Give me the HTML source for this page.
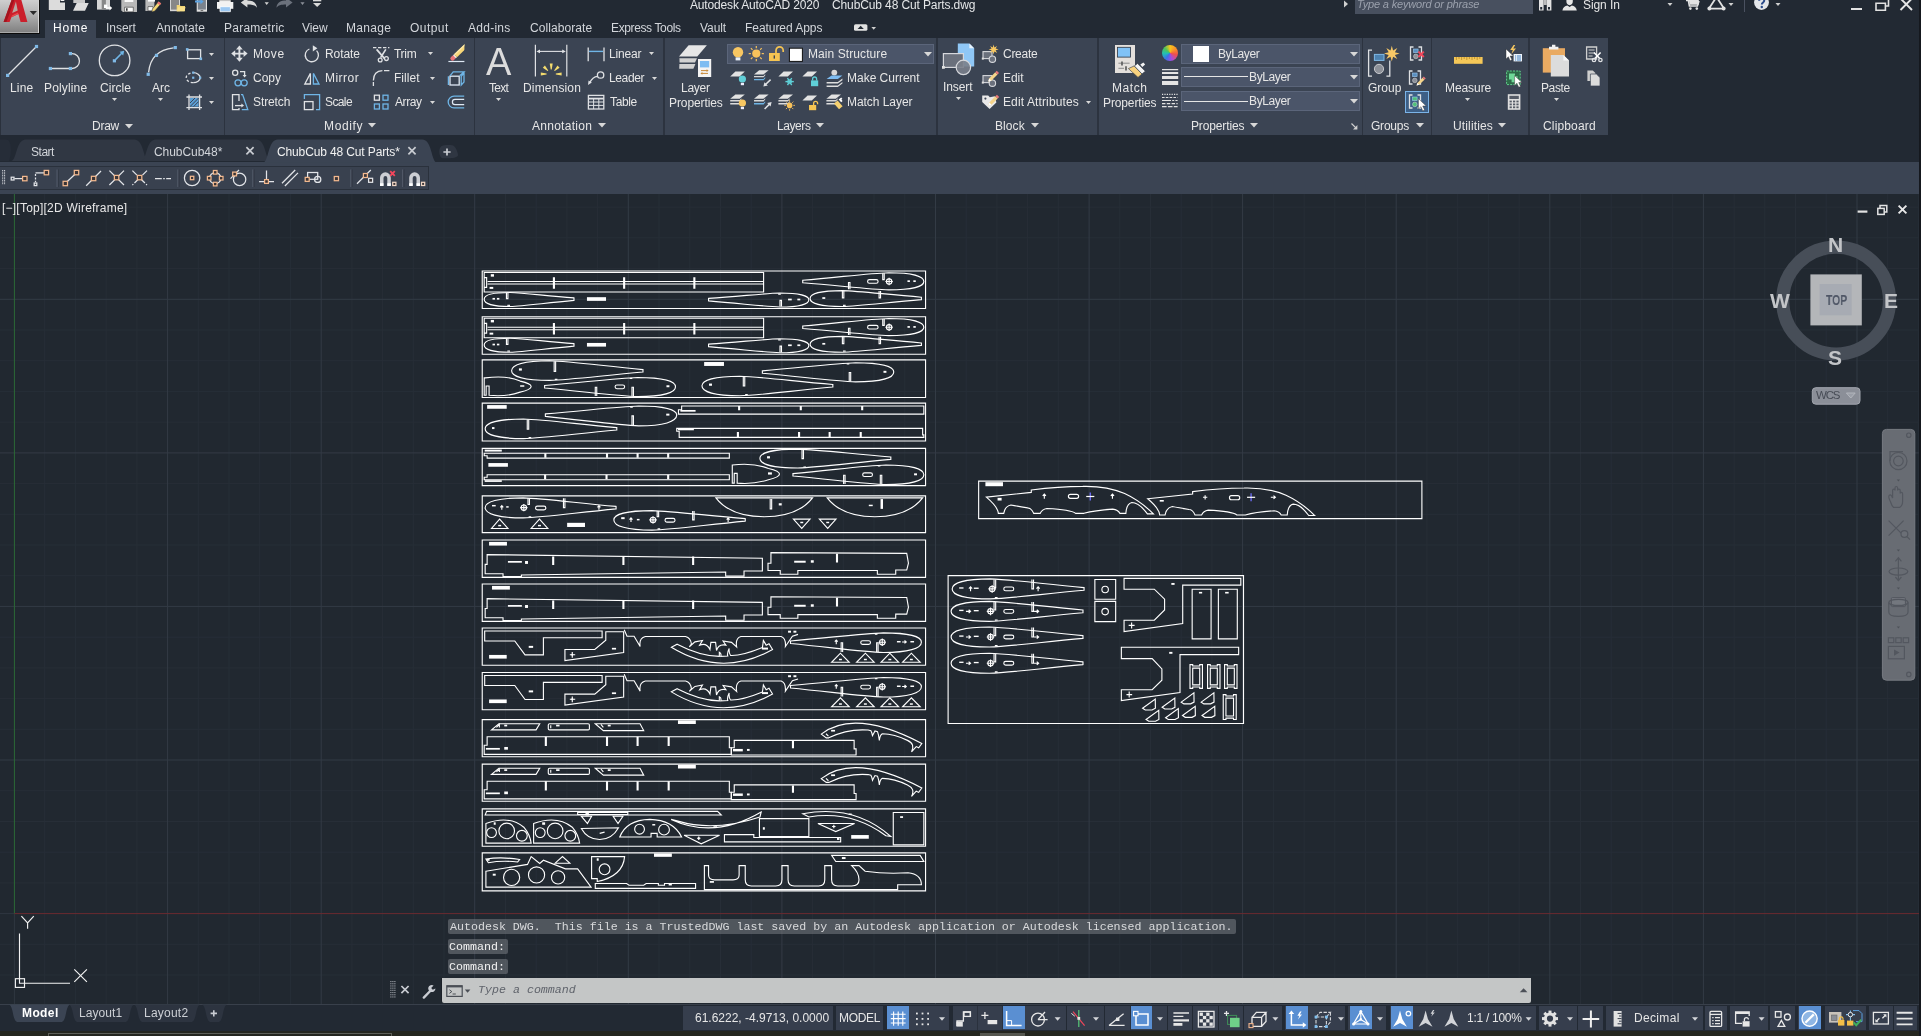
<!DOCTYPE html>
<html><head><meta charset="utf-8"><title>Autodesk AutoCAD 2020 - ChubCub 48 Cut Parts.dwg</title>
<style>html,body{margin:0;padding:0}body{width:1921px;height:1036px;overflow:hidden;background:#212830;position:relative;font-family:"Liberation Sans",sans-serif}
body>div,body>svg{position:absolute;display:block}svg{overflow:hidden}.t{white-space:pre;will-change:transform}</style></head>
<body>
<div style="left:0px;top:194px;width:1921px;height:810px;background:#212830;"></div>
<svg style="left:0px;top:194px;" width="1921" height="810" viewBox="0 194 1921 810"><path d="M44.7 194V1004M75.4 194V1004M106.1 194V1004M136.9 194V1004M198.3 194V1004M229.0 194V1004M259.7 194V1004M290.4 194V1004M351.9 194V1004M382.6 194V1004M413.3 194V1004M444.0 194V1004M505.5 194V1004M536.2 194V1004M566.9 194V1004M597.6 194V1004M659.0 194V1004M689.8 194V1004M720.5 194V1004M751.2 194V1004M812.6 194V1004M843.3 194V1004M874.0 194V1004M904.8 194V1004M966.2 194V1004M996.9 194V1004M1027.6 194V1004M1058.3 194V1004M1119.8 194V1004M1150.5 194V1004M1181.2 194V1004M1211.9 194V1004M1273.4 194V1004M1304.1 194V1004M1334.8 194V1004M1365.5 194V1004M1426.9 194V1004M1457.7 194V1004M1488.4 194V1004M1519.1 194V1004M1580.5 194V1004M1611.2 194V1004M1641.9 194V1004M1672.7 194V1004M1734.1 194V1004M1764.8 194V1004M1795.5 194V1004M1826.2 194V1004M1887.7 194V1004M1918.4 194V1004M0 882.9H1921M0 852.2H1921M0 821.5H1921M0 790.7H1921M0 729.3H1921M0 698.6H1921M0 667.9H1921M0 637.2H1921M0 575.7H1921M0 545.0H1921M0 514.3H1921M0 483.6H1921M0 422.1H1921M0 391.4H1921M0 360.7H1921M0 330.0H1921M0 268.6H1921M0 237.8H1921M0 207.1H1921M0 944.3H1921M0 975.0H1921" stroke="#272e37" stroke-width="1" fill="none"/><path d="M167.6 194V1004M321.2 194V1004M474.7 194V1004M628.3 194V1004M781.9 194V1004M935.5 194V1004M1089.1 194V1004M1242.6 194V1004M1396.2 194V1004M1549.8 194V1004M1703.4 194V1004M1857.0 194V1004M0 760.0H1921M0 606.4H1921M0 452.9H1921M0 299.3H1921" stroke="#333b45" stroke-width="1" fill="none"/><path d="M14.4 913.6V1004M0 913.6H14.4" stroke="#2f3740" stroke-width="1" fill="none"/><path d="M14.4 194V913.6" stroke="#2c6a36" stroke-width="1"/><path d="M14.4 913.6H1921" stroke="#6a2a30" stroke-width="1"/></svg>
<div class="t" style="left:2.14px;top:201.84px;font-size:12px;line-height:12px;color:#e8e8e8;letter-spacing:0.230px;">[−][Top][2D Wireframe]</div>
<svg style="left:1854px;top:203px;" width="60" height="14" viewBox="0 0 60 14"><path d="M3.600 8.600h9.800" stroke="#e2e2e2" stroke-width="2.200"/><path d="M26 5.400v-2.800h6.800v6.400h-2.600" stroke="#e2e2e2" stroke-width="1.500" fill="none"/><rect x="23.800" y="5.400" width="6.400" height="6" fill="#212830" stroke="#e2e2e2" stroke-width="1.500"/><path d="M44.600 2.600l7.800 7.800M52.400 2.600l-7.800 7.800" stroke="#e8e8e8" stroke-width="1.900"/></svg>
<svg style="left:470px;top:260px;" width="980" height="640" viewBox="470 260 980 640"><g transform="translate(470 260) scale(0.244664)"><rect x="50" y="45" width="1812" height="153" fill="none" stroke="#fff" stroke-width="1.12" vector-effect="non-scaling-stroke"/><path d="M58 51H1200V131H58zM72 88H1200M72 98H1200M58 72H68V112H58" fill="none" stroke="#fff" stroke-width="1.12" vector-effect="non-scaling-stroke"/><path d="M341 70V115H345V70M628 70V115H632V70M915 70V115H919V70" fill="none" stroke="#fff" stroke-width="1.12" vector-effect="non-scaling-stroke"/><rect x="85" y="58" width="13" height="10" fill="#fff" stroke="none"/><rect x="80" y="110" width="15" height="8" fill="#fff" stroke="none"/><path d="M1360.0 83.0C1528.3 68.2 1637.2 54.2 1711.5 52.0C1805.5 52.0 1855.0 66.4 1855.0 88.0C1855.0 108.4 1805.5 122.0 1711.5 122.0C1637.2 120.0 1528.3 106.7 1360.0 93.0z" fill="none" stroke="#fff" stroke-width="1.12" vector-effect="non-scaling-stroke"/><path d="M1547 120V92H1553V120" fill="none" stroke="#fff" stroke-width="1.12" vector-effect="non-scaling-stroke"/><path d="M1687 54V80H1693V54" fill="none" stroke="#fff" stroke-width="1.12" vector-effect="non-scaling-stroke"/><rect x="1625" y="80" width="43" height="15" rx="7.5" fill="none" stroke="#fff" stroke-width="1.12" vector-effect="non-scaling-stroke"/><circle cx="1713" cy="88" r="11" fill="none" stroke="#fff" stroke-width="1.12" vector-effect="non-scaling-stroke"/><path d="M1698 88H1728M1713 73V103" fill="none" stroke="#fff" stroke-width="1.12" vector-effect="non-scaling-stroke"/><rect x="1788" y="83" width="10" height="7" fill="#fff" stroke="none"/><rect x="1812" y="83" width="10" height="7" fill="#fff" stroke="none"/><path d="M425.0 155.0C300.2 145.2 219.5 134.6 164.4 133.0C94.7 133.0 58.0 143.8 58.0 160.0C58.0 178.0 94.7 190.0 164.4 190.0C219.5 188.2 300.2 176.5 425.0 165.0z" fill="none" stroke="#fff" stroke-width="1.12" vector-effect="non-scaling-stroke"/><path d="M149 135V158H155V135" fill="none" stroke="#fff" stroke-width="1.12" vector-effect="non-scaling-stroke"/><path d="M155 188V185H161V188" fill="none" stroke="#fff" stroke-width="1.12" vector-effect="non-scaling-stroke"/><rect x="92" y="155" width="10" height="7" fill="#fff" stroke="none"/><rect x="110" y="155" width="10" height="7" fill="#fff" stroke="none"/><rect x="478" y="152" width="78" height="15" fill="#fff" stroke="none"/><path d="M975.0 157.0C1114.4 147.2 1204.6 136.6 1266.1 135.0C1344.0 135.0 1385.0 145.8 1385.0 162.0C1385.0 180.0 1344.0 192.0 1266.1 192.0C1204.6 190.2 1114.4 178.5 975.0 167.0z" fill="none" stroke="#fff" stroke-width="1.12" vector-effect="non-scaling-stroke"/><path d="M1267 190V165H1273V190" fill="none" stroke="#fff" stroke-width="1.12" vector-effect="non-scaling-stroke"/><path d="M1262 137V140H1268V137" fill="none" stroke="#fff" stroke-width="1.12" vector-effect="non-scaling-stroke"/><rect x="1300" y="158" width="15" height="7" fill="#fff" stroke="none"/><rect x="1338" y="158" width="12" height="7" fill="#fff" stroke="none"/><path d="M1845.0 152.0C1690.3 139.4 1590.2 126.9 1522.0 125.0C1435.5 125.0 1390.0 137.8 1390.0 157.0C1390.0 176.8 1435.5 190.0 1522.0 190.0C1590.2 188.0 1690.3 175.2 1845.0 162.0z" fill="none" stroke="#fff" stroke-width="1.12" vector-effect="non-scaling-stroke"/><path d="M1522 127V155H1528V127" fill="none" stroke="#fff" stroke-width="1.12" vector-effect="non-scaling-stroke"/><path d="M1672 127V155H1678V127" fill="none" stroke="#fff" stroke-width="1.12" vector-effect="non-scaling-stroke"/><path d="M1527 188V185H1533V188" fill="none" stroke="#fff" stroke-width="1.12" vector-effect="non-scaling-stroke"/><rect x="1440" y="152" width="12" height="7" fill="#fff" stroke="none"/><rect x="50" y="232" width="1812" height="153" fill="none" stroke="#fff" stroke-width="1.12" vector-effect="non-scaling-stroke"/><path d="M58 238H1200V318H58zM72 275H1200M72 285H1200M58 259H68V299H58" fill="none" stroke="#fff" stroke-width="1.12" vector-effect="non-scaling-stroke"/><path d="M341 257V302H345V257M628 257V302H632V257M915 257V302H919V257" fill="none" stroke="#fff" stroke-width="1.12" vector-effect="non-scaling-stroke"/><rect x="85" y="245" width="13" height="10" fill="#fff" stroke="none"/><rect x="80" y="297" width="15" height="8" fill="#fff" stroke="none"/><path d="M1360.0 270.0C1528.3 255.2 1637.2 241.2 1711.5 239.0C1805.5 239.0 1855.0 253.4 1855.0 275.0C1855.0 295.4 1805.5 309.0 1711.5 309.0C1637.2 307.0 1528.3 293.7 1360.0 280.0z" fill="none" stroke="#fff" stroke-width="1.12" vector-effect="non-scaling-stroke"/><path d="M1547 307V279H1553V307" fill="none" stroke="#fff" stroke-width="1.12" vector-effect="non-scaling-stroke"/><path d="M1687 241V267H1693V241" fill="none" stroke="#fff" stroke-width="1.12" vector-effect="non-scaling-stroke"/><rect x="1625" y="267" width="43" height="15" rx="7.5" fill="none" stroke="#fff" stroke-width="1.12" vector-effect="non-scaling-stroke"/><circle cx="1713" cy="275" r="11" fill="none" stroke="#fff" stroke-width="1.12" vector-effect="non-scaling-stroke"/><path d="M1698 275H1728M1713 260V290" fill="none" stroke="#fff" stroke-width="1.12" vector-effect="non-scaling-stroke"/><rect x="1788" y="270" width="10" height="7" fill="#fff" stroke="none"/><rect x="1812" y="270" width="10" height="7" fill="#fff" stroke="none"/><path d="M425.0 342.0C300.2 332.1 219.5 321.6 164.4 320.0C94.7 320.0 58.0 330.8 58.0 347.0C58.0 365.0 94.7 377.0 164.4 377.0C219.5 375.2 300.2 363.5 425.0 352.0z" fill="none" stroke="#fff" stroke-width="1.12" vector-effect="non-scaling-stroke"/><path d="M149 322V345H155V322" fill="none" stroke="#fff" stroke-width="1.12" vector-effect="non-scaling-stroke"/><path d="M155 375V372H161V375" fill="none" stroke="#fff" stroke-width="1.12" vector-effect="non-scaling-stroke"/><rect x="92" y="342" width="10" height="7" fill="#fff" stroke="none"/><rect x="110" y="342" width="10" height="7" fill="#fff" stroke="none"/><rect x="478" y="339" width="78" height="15" fill="#fff" stroke="none"/><path d="M975.0 344.0C1114.4 334.1 1204.6 323.6 1266.1 322.0C1344.0 322.0 1385.0 332.8 1385.0 349.0C1385.0 367.0 1344.0 379.0 1266.1 379.0C1204.6 377.2 1114.4 365.5 975.0 354.0z" fill="none" stroke="#fff" stroke-width="1.12" vector-effect="non-scaling-stroke"/><path d="M1267 377V352H1273V377" fill="none" stroke="#fff" stroke-width="1.12" vector-effect="non-scaling-stroke"/><path d="M1262 324V327H1268V324" fill="none" stroke="#fff" stroke-width="1.12" vector-effect="non-scaling-stroke"/><rect x="1300" y="345" width="15" height="7" fill="#fff" stroke="none"/><rect x="1338" y="345" width="12" height="7" fill="#fff" stroke="none"/><path d="M1845.0 339.0C1690.3 326.4 1590.2 313.9 1522.0 312.0C1435.5 312.0 1390.0 324.8 1390.0 344.0C1390.0 363.8 1435.5 377.0 1522.0 377.0C1590.2 375.0 1690.3 362.1 1845.0 349.0z" fill="none" stroke="#fff" stroke-width="1.12" vector-effect="non-scaling-stroke"/><path d="M1522 314V342H1528V314" fill="none" stroke="#fff" stroke-width="1.12" vector-effect="non-scaling-stroke"/><path d="M1672 314V342H1678V314" fill="none" stroke="#fff" stroke-width="1.12" vector-effect="non-scaling-stroke"/><path d="M1527 375V372H1533V375" fill="none" stroke="#fff" stroke-width="1.12" vector-effect="non-scaling-stroke"/><rect x="1440" y="339" width="12" height="7" fill="#fff" stroke="none"/><rect x="50" y="408" width="1812" height="154" fill="none" stroke="#fff" stroke-width="1.12" vector-effect="non-scaling-stroke"/><path d="M707.0 448.0C524.4 430.4 406.3 414.5 325.7 412.0C223.7 412.0 170.0 428.4 170.0 453.0C170.0 476.4 223.7 492.0 325.7 492.0C406.3 489.7 524.4 474.4 707.0 458.0z" fill="none" stroke="#fff" stroke-width="1.12" vector-effect="non-scaling-stroke"/><path d="M344 414V455H350V414" fill="none" stroke="#fff" stroke-width="1.12" vector-effect="non-scaling-stroke"/><path d="M349 490V488H355V490" fill="none" stroke="#fff" stroke-width="1.12" vector-effect="non-scaling-stroke"/><rect x="200" y="443" width="12" height="9" fill="#fff" stroke="none"/><path d="M62 482Q150 470 205 495Q250 505 250 517Q250 530 205 540Q150 560 78 553V515H66V553H58V482z" fill="none" stroke="#fff" stroke-width="1.12" vector-effect="non-scaling-stroke"/><rect x="205" y="512" width="17" height="6" fill="#fff" stroke="none"/><path d="M305.0 513.0C486.9 497.1 604.6 482.3 684.9 480.0C786.5 480.0 840.0 495.2 840.0 518.0C840.0 542.0 786.5 558.0 684.9 558.0C604.6 555.6 486.9 540.0 305.0 523.0z" fill="none" stroke="#fff" stroke-width="1.12" vector-effect="non-scaling-stroke"/><path d="M512 556V520H518V556" fill="none" stroke="#fff" stroke-width="1.12" vector-effect="non-scaling-stroke"/><path d="M662 556V520H668V556" fill="none" stroke="#fff" stroke-width="1.12" vector-effect="non-scaling-stroke"/><path d="M655 482V484H661V482" fill="none" stroke="#fff" stroke-width="1.12" vector-effect="non-scaling-stroke"/><rect x="593" y="511" width="39" height="15" rx="7.5" fill="none" stroke="#fff" stroke-width="1.12" vector-effect="non-scaling-stroke"/><rect x="803" y="512" width="12" height="8" fill="#fff" stroke="none"/><rect x="957" y="417" width="81" height="16" fill="#fff" stroke="none"/><path d="M1195.0 453.0C1377.6 437.1 1495.7 422.3 1576.3 420.0C1678.3 420.0 1732.0 435.2 1732.0 458.0C1732.0 482.0 1678.3 498.0 1576.3 498.0C1495.7 495.6 1377.6 480.0 1195.0 463.0z" fill="none" stroke="#fff" stroke-width="1.12" vector-effect="non-scaling-stroke"/><path d="M1550 496V460H1556V496" fill="none" stroke="#fff" stroke-width="1.12" vector-effect="non-scaling-stroke"/><path d="M1542 422V425H1548V422" fill="none" stroke="#fff" stroke-width="1.12" vector-effect="non-scaling-stroke"/><rect x="1690" y="453" width="12" height="8" fill="#fff" stroke="none"/><path d="M1483.0 509.0C1301.1 492.6 1183.4 477.3 1103.2 475.0C1001.5 475.0 948.0 490.6 948.0 514.0C948.0 538.6 1001.5 555.0 1103.2 555.0C1183.4 552.5 1301.1 536.5 1483.0 519.0z" fill="none" stroke="#fff" stroke-width="1.12" vector-effect="non-scaling-stroke"/><path d="M1117 477V515H1123V477" fill="none" stroke="#fff" stroke-width="1.12" vector-effect="non-scaling-stroke"/><path d="M1127 553V550H1133V553" fill="none" stroke="#fff" stroke-width="1.12" vector-effect="non-scaling-stroke"/><rect x="977" y="505" width="12" height="9" fill="#fff" stroke="none"/><rect x="50" y="585" width="1812" height="155" fill="none" stroke="#fff" stroke-width="1.12" vector-effect="non-scaling-stroke"/><rect x="70" y="593" width="80" height="15" fill="#fff" stroke="none"/><path d="M308.0 629.0C490.6 613.6 608.7 599.2 689.3 597.0C791.3 597.0 845.0 611.8 845.0 634.0C845.0 660.4 791.3 678.0 689.3 678.0C608.7 675.4 490.6 658.2 308.0 639.0z" fill="none" stroke="#fff" stroke-width="1.12" vector-effect="non-scaling-stroke"/><path d="M662 676V637H668V676" fill="none" stroke="#fff" stroke-width="1.12" vector-effect="non-scaling-stroke"/><path d="M657 599V602H663V599" fill="none" stroke="#fff" stroke-width="1.12" vector-effect="non-scaling-stroke"/><rect x="802" y="628" width="13" height="8" fill="#fff" stroke="none"/><path d="M600.0 685.0C417.1 668.0 298.7 652.4 218.0 650.0C115.8 650.0 62.0 666.0 62.0 690.0C62.0 714.0 115.8 730.0 218.0 730.0C298.7 727.6 417.1 712.0 600.0 695.0z" fill="none" stroke="#fff" stroke-width="1.12" vector-effect="non-scaling-stroke"/><path d="M234 652V692H240V652" fill="none" stroke="#fff" stroke-width="1.12" vector-effect="non-scaling-stroke"/><path d="M242 728V726H248V728" fill="none" stroke="#fff" stroke-width="1.12" vector-effect="non-scaling-stroke"/><rect x="90" y="683" width="10" height="8" fill="#fff" stroke="none"/><path d="M865 597H1855V630H852V612H865z" fill="none" stroke="#fff" stroke-width="1.12" vector-effect="non-scaling-stroke"/><path d="M1098 597V612H1102V597M1350 597V612H1354V597M1601 597V612H1605V597" fill="none" stroke="#fff" stroke-width="1.12" vector-effect="non-scaling-stroke"/><rect x="860" y="613" width="62" height="7" fill="#fff" stroke="none"/><path d="M845 688H1850V715H1855V725H855V700H845z" fill="none" stroke="#fff" stroke-width="1.12" vector-effect="non-scaling-stroke"/><path d="M1093 725V705H1097V725M1343 725V705H1347V725M1468 725V705H1472V725M1595 725V705H1599V725" fill="none" stroke="#fff" stroke-width="1.12" vector-effect="non-scaling-stroke"/><rect x="850" y="688" width="65" height="8" fill="#fff" stroke="none"/><rect x="50" y="770" width="1812" height="152" fill="none" stroke="#fff" stroke-width="1.12" vector-effect="non-scaling-stroke"/><path d="M58 790H1060V810H70V800H58z" fill="none" stroke="#fff" stroke-width="1.12" vector-effect="non-scaling-stroke"/><path d="M306 790V806H310V790M558 790V806H562V790M683 790V806H687V790M808 790V806H812V790" fill="none" stroke="#fff" stroke-width="1.12" vector-effect="non-scaling-stroke"/><rect x="60" y="775" width="70" height="8" fill="#fff" stroke="none"/><rect x="75" y="830" width="80" height="15" fill="#fff" stroke="none"/><path d="M70 878H1060V898H58V888H70z" fill="none" stroke="#fff" stroke-width="1.12" vector-effect="non-scaling-stroke"/><path d="M305 878V894H309V878M556 878V894H560V878M808 878V894H812V878" fill="none" stroke="#fff" stroke-width="1.12" vector-effect="non-scaling-stroke"/><rect x="60" y="900" width="70" height="7" fill="#fff" stroke="none"/><path d="M1720.0 805.0C1538.1 789.6 1420.4 775.2 1340.2 773.0C1238.5 773.0 1185.0 787.8 1185.0 810.0C1185.0 834.0 1238.5 850.0 1340.2 850.0C1420.4 847.6 1538.1 832.0 1720.0 815.0z" fill="none" stroke="#fff" stroke-width="1.12" vector-effect="non-scaling-stroke"/><path d="M1357 775V812H1363V775" fill="none" stroke="#fff" stroke-width="1.12" vector-effect="non-scaling-stroke"/><path d="M1365 848V846H1371V848" fill="none" stroke="#fff" stroke-width="1.12" vector-effect="non-scaling-stroke"/><rect x="1214" y="802" width="12" height="9" fill="#fff" stroke="none"/><path d="M1072 838Q1160 828 1220 852Q1265 862 1265 875Q1265 888 1220 898Q1160 918 1092 912V872H1080V912H1072z" fill="none" stroke="#fff" stroke-width="1.12" vector-effect="non-scaling-stroke"/><rect x="1218" y="868" width="16" height="9" fill="#fff" stroke="none"/><path d="M1320.0 873.0C1501.9 856.0 1619.6 840.4 1699.8 838.0C1801.5 838.0 1855.0 854.0 1855.0 878.0C1855.0 902.0 1801.5 918.0 1699.8 918.0C1619.6 915.6 1501.9 900.0 1320.0 883.0z" fill="none" stroke="#fff" stroke-width="1.12" vector-effect="non-scaling-stroke"/><path d="M1527 916V880H1533V916" fill="none" stroke="#fff" stroke-width="1.12" vector-effect="non-scaling-stroke"/><path d="M1677 916V880H1683V916" fill="none" stroke="#fff" stroke-width="1.12" vector-effect="non-scaling-stroke"/><path d="M1669 840V842H1675V840" fill="none" stroke="#fff" stroke-width="1.12" vector-effect="non-scaling-stroke"/><rect x="1605" y="870" width="40" height="15" rx="7.5" fill="none" stroke="#fff" stroke-width="1.12" vector-effect="non-scaling-stroke"/><rect x="1815" y="872" width="12" height="8" fill="#fff" stroke="none"/></g><g transform="translate(470 480) scale(0.244664)"><rect x="50" y="65" width="1812" height="150" fill="none" stroke="#fff" stroke-width="1.12" vector-effect="non-scaling-stroke"/><path d="M597.0 108.0C415.1 91.0 297.4 75.4 217.1 73.0C115.5 73.0 62.0 89.0 62.0 113.0C62.0 138.2 115.5 155.0 217.1 155.0C297.4 152.5 415.1 136.1 597.0 118.0z" fill="none" stroke="#fff" stroke-width="1.12" vector-effect="non-scaling-stroke"/><path d="M237 75V100H243V75" fill="none" stroke="#fff" stroke-width="1.12" vector-effect="non-scaling-stroke"/><path d="M382 75V113H388V75" fill="none" stroke="#fff" stroke-width="1.12" vector-effect="non-scaling-stroke"/><path d="M242 153V150H248V153" fill="none" stroke="#fff" stroke-width="1.12" vector-effect="non-scaling-stroke"/><circle cx="220" cy="113" r="11" fill="none" stroke="#fff" stroke-width="1.12" vector-effect="non-scaling-stroke"/><path d="M205 113H235M220 98V128" fill="none" stroke="#fff" stroke-width="1.12" vector-effect="non-scaling-stroke"/><rect x="268" y="107" width="42" height="15" rx="7.5" fill="none" stroke="#fff" stroke-width="1.12" vector-effect="non-scaling-stroke"/><path d="M130 122V105M124 112L130 105L136 112" fill="none" stroke="#fff" stroke-width="1.12" vector-effect="non-scaling-stroke"/><rect x="90" y="102" width="15" height="6" fill="#fff" stroke="none"/><rect x="148" y="107" width="10" height="6" fill="#fff" stroke="none"/><path d="M527 122V105M521 112L527 105L533 112" fill="none" stroke="#fff" stroke-width="1.12" vector-effect="non-scaling-stroke"/><path d="M1125.0 158.0C942.4 142.1 824.3 127.3 743.7 125.0C641.7 125.0 588.0 140.2 588.0 163.0C588.0 188.2 641.7 205.0 743.7 205.0C824.3 202.5 942.4 186.1 1125.0 168.0z" fill="none" stroke="#fff" stroke-width="1.12" vector-effect="non-scaling-stroke"/><path d="M765 127V150H771V127" fill="none" stroke="#fff" stroke-width="1.12" vector-effect="non-scaling-stroke"/><path d="M910 127V163H916V127" fill="none" stroke="#fff" stroke-width="1.12" vector-effect="non-scaling-stroke"/><path d="M769 203V200H775V203" fill="none" stroke="#fff" stroke-width="1.12" vector-effect="non-scaling-stroke"/><circle cx="748" cy="163" r="11" fill="none" stroke="#fff" stroke-width="1.12" vector-effect="non-scaling-stroke"/><path d="M733 163H763M748 148V178" fill="none" stroke="#fff" stroke-width="1.12" vector-effect="non-scaling-stroke"/><rect x="797" y="157" width="41" height="15" rx="7.5" fill="none" stroke="#fff" stroke-width="1.12" vector-effect="non-scaling-stroke"/><path d="M658 172V155M652 162L658 155L664 162" fill="none" stroke="#fff" stroke-width="1.12" vector-effect="non-scaling-stroke"/><rect x="618" y="152" width="14" height="8" fill="#fff" stroke="none"/><rect x="682" y="159" width="11" height="6" fill="#fff" stroke="none"/><path d="M1055 172V155M1049 162L1055 155L1061 162" fill="none" stroke="#fff" stroke-width="1.12" vector-effect="non-scaling-stroke"/><path d="M88 198L155 198L121 160z" fill="none" stroke="#fff" stroke-width="1.12" vector-effect="non-scaling-stroke"/><rect x="115.33333333333333" y="183.33333333333334" width="12.0" height="6.0" fill="#fff" stroke="none"/><path d="M250 198L318 198L284 160z" fill="none" stroke="#fff" stroke-width="1.12" vector-effect="non-scaling-stroke"/><rect x="278.0" y="183.33333333333334" width="12.0" height="6.0" fill="#fff" stroke="none"/><rect x="397" y="175" width="73" height="17" fill="#fff" stroke="none"/><path d="M1005 73H1400Q1340 150 1202 150Q1065 150 1005 73z" fill="none" stroke="#fff" stroke-width="1.12" vector-effect="non-scaling-stroke"/><path d="M1227 78V118H1233V78" fill="none" stroke="#fff" stroke-width="1.12" vector-effect="non-scaling-stroke"/><rect x="1262" y="95" width="12" height="9" fill="#fff" stroke="none"/><path d="M1460 73H1850Q1790 150 1655 150Q1520 150 1460 73z" fill="none" stroke="#fff" stroke-width="1.12" vector-effect="non-scaling-stroke"/><rect x="1678" y="78" width="10" height="40" fill="#fff" stroke="none"/><rect x="1630" y="101" width="16" height="6" fill="#fff" stroke="none"/><path d="M1322 160L1390 160L1356 198z" fill="none" stroke="#fff" stroke-width="1.12" vector-effect="non-scaling-stroke"/><rect x="1350.0" y="170.66666666666666" width="12.0" height="6.0" fill="#fff" stroke="none"/><path d="M1428 160L1496 160L1462 198z" fill="none" stroke="#fff" stroke-width="1.12" vector-effect="non-scaling-stroke"/><rect x="1456.0" y="170.66666666666666" width="12.0" height="6.0" fill="#fff" stroke="none"/><rect x="50" y="245" width="1812" height="153" fill="none" stroke="#fff" stroke-width="1.12" vector-effect="non-scaling-stroke"/><rect x="78" y="253" width="73" height="15" fill="#fff" stroke="none"/><path d="M70 305L1195 320V372H1120V393H1045V376L210 388V395H135V383H62V345H70z" fill="none" stroke="#fff" stroke-width="1.12" vector-effect="non-scaling-stroke"/><path d="M338 313V345H342V313M625 313V345H629V313M910 313V345H914V313" fill="none" stroke="#fff" stroke-width="1.12" vector-effect="non-scaling-stroke"/><rect x="155" y="331" width="57" height="7" fill="#fff" stroke="none"/><rect x="225" y="331" width="12" height="12" fill="#fff" stroke="none"/><path d="M1230 297L1785 300L1792 340L1785 368H1740V385H1665V370H1340V385H1268V370H1218V340H1230z" fill="none" stroke="#fff" stroke-width="1.12" vector-effect="non-scaling-stroke"/><path d="M1498 301V335H1502V301" fill="none" stroke="#fff" stroke-width="1.12" vector-effect="non-scaling-stroke"/><rect x="1325" y="330" width="47" height="8" fill="#fff" stroke="none"/><rect x="1393" y="328" width="12" height="10" fill="#fff" stroke="none"/><rect x="50" y="425" width="1812" height="153" fill="none" stroke="#fff" stroke-width="1.12" vector-effect="non-scaling-stroke"/><rect x="90" y="433" width="73" height="15" fill="#fff" stroke="none"/><path d="M70 485L1195 500V552H1120V573H1045V556L210 568V575H135V563H62V525H70z" fill="none" stroke="#fff" stroke-width="1.12" vector-effect="non-scaling-stroke"/><path d="M338 493V525H342V493M625 493V525H629V493M910 493V525H914V493" fill="none" stroke="#fff" stroke-width="1.12" vector-effect="non-scaling-stroke"/><rect x="155" y="511" width="57" height="7" fill="#fff" stroke="none"/><rect x="225" y="511" width="12" height="12" fill="#fff" stroke="none"/><path d="M1230 477L1785 480L1792 520L1785 548H1740V565H1665V550H1340V565H1268V550H1218V520H1230z" fill="none" stroke="#fff" stroke-width="1.12" vector-effect="non-scaling-stroke"/><path d="M1498 481V515H1502V481" fill="none" stroke="#fff" stroke-width="1.12" vector-effect="non-scaling-stroke"/><rect x="1325" y="510" width="47" height="8" fill="#fff" stroke="none"/><rect x="1393" y="508" width="12" height="10" fill="#fff" stroke="none"/><rect x="50" y="605" width="1812" height="152" fill="none" stroke="#fff" stroke-width="1.12" vector-effect="non-scaling-stroke"/><path d="M60 617H540V645H300V715H225L183 658H60z" fill="none" stroke="#fff" stroke-width="1.12" vector-effect="non-scaling-stroke"/><rect x="240" y="678" width="18" height="8" fill="#fff" stroke="none"/><rect x="78" y="715" width="72" height="15" fill="#fff" stroke="none"/><path d="M555 620H628V705L388 738V693H510L555 655z" fill="none" stroke="#fff" stroke-width="1.12" vector-effect="non-scaling-stroke"/><circle cx="418" cy="714" r="0" fill="none" stroke="#fff" stroke-width="1.12" vector-effect="non-scaling-stroke"/><path d="M414 714H422M418 710V718" fill="none" stroke="#fff" stroke-width="1.12" vector-effect="non-scaling-stroke"/><path d="M408 714H430M418 703V726" fill="none" stroke="#fff" stroke-width="1.12" vector-effect="non-scaling-stroke"/><rect x="580" y="686" width="17" height="7" fill="#fff" stroke="none"/><path d="M 630.3 611.9 L 641.8 638.7 L 670.6 638.7 L 695.4 680.8 Q 689.7 646.3 716.5 639.4 L 881.2 639.4 Q 902.3 644.4 904.9 671.2 L 896.5 681.6 L 919.5 661.6 L 950.1 655.9 L 938.7 675.0 Q 967.4 663.6 980.8 693.0 L 984.6 663.6 L 1003.8 663.6 L 1007.6 696.9 Q 1015.2 669.3 1045.9 675.0 L 1034.4 657.8 L 1068.9 663.6 L 1089.9 682.7 Q 1083.4 646.3 1107.2 639.4 L 1271.9 639.4 Q 1291.8 646.3 1289.1 680.8 L 1317.8 638.7 L 1340.8 631.0" fill="none" stroke="#fff" stroke-width="1.12" vector-effect="non-scaling-stroke"/><path d="M 823.0 683.9 Q 1028.7 809.1 1236.6 693.0 L 1222.1 669.3 L 1210.6 675.0 L 1199.1 655.9 L 1195.3 684.6 Q 1111.0 719.1 1065.0 717.2 Q 1057.4 707.6 1059.3 688.5 Q 1049.7 707.6 1053.5 719.1 L 1024.8 721.0 Q 1028.7 707.6 1019.1 703.8 L 1019.1 721.0 Q 938.7 719.1 846.7 671.2 Z" fill="none" stroke="#fff" stroke-width="1.12" vector-effect="non-scaling-stroke"/><rect x="1300" y="616" width="12" height="8" fill="#fff" stroke="none"/><rect x="1322" y="616" width="12" height="8" fill="#fff" stroke="none"/><rect x="1193" y="685" width="25" height="8" fill="#fff" stroke="none"/><path d="M1310.0 658.0C1491.9 642.1 1609.6 627.3 1689.8 625.0C1791.5 625.0 1845.0 640.2 1845.0 663.0C1845.0 688.2 1791.5 705.0 1689.8 705.0C1609.6 702.5 1491.9 686.1 1310.0 668.0z" fill="none" stroke="#fff" stroke-width="1.12" vector-effect="non-scaling-stroke"/><path d="M1517 703V665H1523V703" fill="none" stroke="#fff" stroke-width="1.12" vector-effect="non-scaling-stroke"/><path d="M1662 703V665H1668V703" fill="none" stroke="#fff" stroke-width="1.12" vector-effect="non-scaling-stroke"/><path d="M1657 627V630H1663V627" fill="none" stroke="#fff" stroke-width="1.12" vector-effect="non-scaling-stroke"/><circle cx="1685" cy="663" r="11" fill="none" stroke="#fff" stroke-width="1.12" vector-effect="non-scaling-stroke"/><path d="M1670 663H1700M1685 648V678" fill="none" stroke="#fff" stroke-width="1.12" vector-effect="non-scaling-stroke"/><rect x="1597" y="657" width="40" height="15" rx="7.5" fill="none" stroke="#fff" stroke-width="1.12" vector-effect="non-scaling-stroke"/><path d="M1497 671V654M1491 661L1497 654L1503 661" fill="none" stroke="#fff" stroke-width="1.12" vector-effect="non-scaling-stroke"/><path d="M1766 662H1783M1776 656L1783 662L1776 668" fill="none" stroke="#fff" stroke-width="1.12" vector-effect="non-scaling-stroke"/><rect x="1745" y="658" width="15" height="6" fill="#fff" stroke="none"/><rect x="1800" y="658" width="15" height="6" fill="#fff" stroke="none"/><path d="M1478 745L1550 745L1514 708z" fill="none" stroke="#fff" stroke-width="1.12" vector-effect="non-scaling-stroke"/><rect x="1508.0" y="730.6666666666666" width="12.0" height="6.0" fill="#fff" stroke="none"/><path d="M1580 745L1652 745L1616 708z" fill="none" stroke="#fff" stroke-width="1.12" vector-effect="non-scaling-stroke"/><rect x="1610.0" y="730.6666666666666" width="12.0" height="6.0" fill="#fff" stroke="none"/><path d="M1680 745L1752 745L1716 708z" fill="none" stroke="#fff" stroke-width="1.12" vector-effect="non-scaling-stroke"/><rect x="1710.0" y="730.6666666666666" width="12.0" height="6.0" fill="#fff" stroke="none"/><path d="M1768 745L1840 745L1804 708z" fill="none" stroke="#fff" stroke-width="1.12" vector-effect="non-scaling-stroke"/><rect x="1798.0" y="730.6666666666666" width="12.0" height="6.0" fill="#fff" stroke="none"/><rect x="50" y="787" width="1812" height="152" fill="none" stroke="#fff" stroke-width="1.12" vector-effect="non-scaling-stroke"/><path d="M60 799H540V827H300V897H225L183 840H60z" fill="none" stroke="#fff" stroke-width="1.12" vector-effect="non-scaling-stroke"/><rect x="240" y="860" width="18" height="8" fill="#fff" stroke="none"/><rect x="78" y="897" width="72" height="15" fill="#fff" stroke="none"/><path d="M555 802H628V887L388 920V875H510L555 837z" fill="none" stroke="#fff" stroke-width="1.12" vector-effect="non-scaling-stroke"/><circle cx="418" cy="896" r="0" fill="none" stroke="#fff" stroke-width="1.12" vector-effect="non-scaling-stroke"/><path d="M414 896H422M418 892V900" fill="none" stroke="#fff" stroke-width="1.12" vector-effect="non-scaling-stroke"/><path d="M408 896H430M418 885V908" fill="none" stroke="#fff" stroke-width="1.12" vector-effect="non-scaling-stroke"/><rect x="580" y="868" width="17" height="7" fill="#fff" stroke="none"/><path d="M 630.3 793.9 L 641.8 820.7 L 670.6 820.7 L 695.4 862.8 Q 689.7 828.3 716.5 821.4 L 881.2 821.4 Q 902.3 826.4 904.9 853.2 L 896.5 863.6 L 919.5 843.6 L 950.1 837.9 L 938.7 857.0 Q 967.4 845.6 980.8 875.0 L 984.6 845.6 L 1003.8 845.6 L 1007.6 878.9 Q 1015.2 851.3 1045.9 857.0 L 1034.4 839.8 L 1068.9 845.6 L 1089.9 864.7 Q 1083.4 828.3 1107.2 821.4 L 1271.9 821.4 Q 1291.8 828.3 1289.1 862.8 L 1317.8 820.7 L 1340.8 813.0" fill="none" stroke="#fff" stroke-width="1.12" vector-effect="non-scaling-stroke"/><path d="M 823.0 865.9 Q 1028.7 991.1 1236.6 875.0 L 1222.1 851.3 L 1210.6 857.0 L 1199.1 837.9 L 1195.3 866.6 Q 1111.0 901.1 1065.0 899.2 Q 1057.4 889.6 1059.3 870.5 Q 1049.7 889.6 1053.5 901.1 L 1024.8 903.0 Q 1028.7 889.6 1019.1 885.8 L 1019.1 903.0 Q 938.7 901.1 846.7 853.2 Z" fill="none" stroke="#fff" stroke-width="1.12" vector-effect="non-scaling-stroke"/><rect x="1300" y="798" width="12" height="8" fill="#fff" stroke="none"/><rect x="1322" y="798" width="12" height="8" fill="#fff" stroke="none"/><rect x="1193" y="867" width="25" height="8" fill="#fff" stroke="none"/><path d="M1310.0 840.0C1491.9 824.1 1609.6 809.3 1689.8 807.0C1791.5 807.0 1845.0 822.2 1845.0 845.0C1845.0 870.2 1791.5 887.0 1689.8 887.0C1609.6 884.5 1491.9 868.1 1310.0 850.0z" fill="none" stroke="#fff" stroke-width="1.12" vector-effect="non-scaling-stroke"/><path d="M1517 885V847H1523V885" fill="none" stroke="#fff" stroke-width="1.12" vector-effect="non-scaling-stroke"/><path d="M1662 885V847H1668V885" fill="none" stroke="#fff" stroke-width="1.12" vector-effect="non-scaling-stroke"/><path d="M1657 809V812H1663V809" fill="none" stroke="#fff" stroke-width="1.12" vector-effect="non-scaling-stroke"/><circle cx="1685" cy="845" r="11" fill="none" stroke="#fff" stroke-width="1.12" vector-effect="non-scaling-stroke"/><path d="M1670 845H1700M1685 830V860" fill="none" stroke="#fff" stroke-width="1.12" vector-effect="non-scaling-stroke"/><rect x="1597" y="839" width="40" height="15" rx="7.5" fill="none" stroke="#fff" stroke-width="1.12" vector-effect="non-scaling-stroke"/><path d="M1497 853V836M1491 843L1497 836L1503 843" fill="none" stroke="#fff" stroke-width="1.12" vector-effect="non-scaling-stroke"/><path d="M1766 844H1783M1776 838L1783 844L1776 850" fill="none" stroke="#fff" stroke-width="1.12" vector-effect="non-scaling-stroke"/><rect x="1745" y="840" width="15" height="6" fill="#fff" stroke="none"/><rect x="1800" y="840" width="15" height="6" fill="#fff" stroke="none"/><path d="M1478 927L1550 927L1514 890z" fill="none" stroke="#fff" stroke-width="1.12" vector-effect="non-scaling-stroke"/><rect x="1508.0" y="912.6666666666666" width="12.0" height="6.0" fill="#fff" stroke="none"/><path d="M1580 927L1652 927L1616 890z" fill="none" stroke="#fff" stroke-width="1.12" vector-effect="non-scaling-stroke"/><rect x="1610.0" y="912.6666666666666" width="12.0" height="6.0" fill="#fff" stroke="none"/><path d="M1680 927L1752 927L1716 890z" fill="none" stroke="#fff" stroke-width="1.12" vector-effect="non-scaling-stroke"/><rect x="1710.0" y="912.6666666666666" width="12.0" height="6.0" fill="#fff" stroke="none"/><path d="M1768 927L1840 927L1804 890z" fill="none" stroke="#fff" stroke-width="1.12" vector-effect="non-scaling-stroke"/><rect x="1798.0" y="912.6666666666666" width="12.0" height="6.0" fill="#fff" stroke="none"/></g><g transform="translate(470 700) scale(0.244664)"><rect x="50" y="80" width="1812" height="152" fill="none" stroke="#fff" stroke-width="1.12" vector-effect="non-scaling-stroke"/><path d="M88 122L118 97H285L270 122z" fill="none" stroke="#fff" stroke-width="1.12" vector-effect="non-scaling-stroke"/><rect x="320" y="97" width="168" height="25" rx="5" fill="none" stroke="#fff" stroke-width="1.12" vector-effect="non-scaling-stroke"/><path d="M512 97H695L710 125H545z" fill="none" stroke="#fff" stroke-width="1.12" vector-effect="non-scaling-stroke"/><rect x="140" y="101" width="12" height="7" fill="#fff" stroke="none"/><rect x="352" y="101" width="14" height="7" fill="#fff" stroke="none"/><rect x="563" y="101" width="12" height="7" fill="#fff" stroke="none"/><path d="M108 112L120 100V112M330 103V115M535 100L545 112" fill="none" stroke="#fff" stroke-width="1.12" vector-effect="non-scaling-stroke"/><rect x="850" y="83" width="73" height="15" fill="#fff" stroke="none"/><path d="M70 150H1060V195H1068V222H58V185H70z" fill="none" stroke="#fff" stroke-width="1.12" vector-effect="non-scaling-stroke"/><path d="M308 150V186H312V150M558 150V186H562V150M683 150V186H687V150M810 150V186H814V150" fill="none" stroke="#fff" stroke-width="1.12" vector-effect="non-scaling-stroke"/><rect x="65" y="196" width="57" height="7" fill="#fff" stroke="none"/><rect x="140" y="192" width="15" height="11" fill="#fff" stroke="none"/><path d="M1080 165H1570V200H1578V225H1068V195H1080z" fill="none" stroke="#fff" stroke-width="1.12" vector-effect="non-scaling-stroke"/><path d="M1318 167V195H1322V167" fill="none" stroke="#fff" stroke-width="1.12" vector-effect="non-scaling-stroke"/><rect x="1075" y="200" width="40" height="10" fill="#fff" stroke="none"/><rect x="1132" y="200" width="11" height="8" fill="#fff" stroke="none"/><path d="M 1435.7 139.4 Q 1572.3 33.5 1846.7 177.7 L 1834.0 195.6 L 1823.8 190.5 L 1804.6 212.2 Q 1821.2 180.3 1788.0 165.0 Q 1734.4 139.4 1685.9 138.2 Q 1675.7 142.0 1673.1 165.0 Q 1670.6 142.0 1665.5 129.2 L 1655.2 126.7 L 1645.0 145.8 Q 1642.5 131.8 1638.6 125.4 L 1627.2 122.8 Q 1542.9 116.5 1466.3 154.8 L 1456.1 154.8 Z" fill="none" stroke="#fff" stroke-width="1.12" vector-effect="non-scaling-stroke"/><rect x="1476" y="122" width="16" height="7" fill="#fff" stroke="none"/><path d="M1455 138L1465 148" fill="none" stroke="#fff" stroke-width="1.12" vector-effect="non-scaling-stroke"/><rect x="50" y="262" width="1812" height="152" fill="none" stroke="#fff" stroke-width="1.12" vector-effect="non-scaling-stroke"/><path d="M88 304L118 279H285L270 304z" fill="none" stroke="#fff" stroke-width="1.12" vector-effect="non-scaling-stroke"/><rect x="320" y="279" width="168" height="25" rx="5" fill="none" stroke="#fff" stroke-width="1.12" vector-effect="non-scaling-stroke"/><path d="M512 279H695L710 307H545z" fill="none" stroke="#fff" stroke-width="1.12" vector-effect="non-scaling-stroke"/><rect x="140" y="283" width="12" height="7" fill="#fff" stroke="none"/><rect x="352" y="283" width="14" height="7" fill="#fff" stroke="none"/><rect x="563" y="283" width="12" height="7" fill="#fff" stroke="none"/><path d="M108 294L120 282V294M330 285V297M535 282L545 294" fill="none" stroke="#fff" stroke-width="1.12" vector-effect="non-scaling-stroke"/><rect x="850" y="265" width="73" height="15" fill="#fff" stroke="none"/><path d="M70 332H1060V377H1068V404H58V367H70z" fill="none" stroke="#fff" stroke-width="1.12" vector-effect="non-scaling-stroke"/><path d="M308 332V368H312V332M558 332V368H562V332M683 332V368H687V332M810 332V368H814V332" fill="none" stroke="#fff" stroke-width="1.12" vector-effect="non-scaling-stroke"/><rect x="65" y="378" width="57" height="7" fill="#fff" stroke="none"/><rect x="140" y="374" width="15" height="11" fill="#fff" stroke="none"/><path d="M1080 347H1570V382H1578V407H1068V377H1080z" fill="none" stroke="#fff" stroke-width="1.12" vector-effect="non-scaling-stroke"/><path d="M1318 349V377H1322V349" fill="none" stroke="#fff" stroke-width="1.12" vector-effect="non-scaling-stroke"/><rect x="1075" y="382" width="40" height="10" fill="#fff" stroke="none"/><rect x="1132" y="382" width="11" height="8" fill="#fff" stroke="none"/><path d="M 1435.7 321.4 Q 1572.3 215.5 1846.7 359.7 L 1834.0 377.6 L 1823.8 372.5 L 1804.6 394.2 Q 1821.2 362.3 1788.0 347.0 Q 1734.4 321.4 1685.9 320.2 Q 1675.7 324.0 1673.1 347.0 Q 1670.6 324.0 1665.5 311.2 L 1655.2 308.7 L 1645.0 327.8 Q 1642.5 313.8 1638.6 307.4 L 1627.2 304.8 Q 1542.9 298.5 1466.3 336.8 L 1456.1 336.8 Z" fill="none" stroke="#fff" stroke-width="1.12" vector-effect="non-scaling-stroke"/><rect x="1476" y="304" width="16" height="7" fill="#fff" stroke="none"/><path d="M1455 320L1465 330" fill="none" stroke="#fff" stroke-width="1.12" vector-effect="non-scaling-stroke"/><rect x="50" y="445" width="1812" height="153" fill="none" stroke="#fff" stroke-width="1.12" vector-effect="non-scaling-stroke"/><path d="M68 455H1012L1027 470H62z" fill="none" stroke="#fff" stroke-width="1.12" vector-effect="non-scaling-stroke"/><path d="M440 460H645V468H440z" fill="none" stroke="#fff" stroke-width="1.12" vector-effect="non-scaling-stroke"/><rect x="472" y="462" width="14" height="10" fill="#fff" stroke="none"/><path d="M455 475H497L480 505zM585 475H625L605 505z" fill="none" stroke="#fff" stroke-width="1.12" vector-effect="non-scaling-stroke"/><path d="M65 585V505Q160 470 220 520Q245 550 250 585z" fill="none" stroke="#fff" stroke-width="1.12" vector-effect="non-scaling-stroke"/><circle cx="88" cy="542" r="20" fill="none" stroke="#fff" stroke-width="1.12" vector-effect="non-scaling-stroke"/><circle cx="150" cy="535" r="32" fill="none" stroke="#fff" stroke-width="1.12" vector-effect="non-scaling-stroke"/><circle cx="212" cy="555" r="22" fill="none" stroke="#fff" stroke-width="1.12" vector-effect="non-scaling-stroke"/><rect x="97" y="500" width="8" height="10" fill="#fff" stroke="none"/><path d="M260 585V505Q355 470 418 520Q443 550 448 585z" fill="none" stroke="#fff" stroke-width="1.12" vector-effect="non-scaling-stroke"/><circle cx="287" cy="542" r="20" fill="none" stroke="#fff" stroke-width="1.12" vector-effect="non-scaling-stroke"/><circle cx="348" cy="535" r="32" fill="none" stroke="#fff" stroke-width="1.12" vector-effect="non-scaling-stroke"/><circle cx="410" cy="555" r="22" fill="none" stroke="#fff" stroke-width="1.12" vector-effect="non-scaling-stroke"/><rect x="295" y="500" width="12" height="10" fill="#fff" stroke="none"/><path d="M455 525L607 522Q580 570 530 570Q480 570 455 525z" fill="none" stroke="#fff" stroke-width="1.12" vector-effect="non-scaling-stroke"/><path d="M530 545L550 540" fill="none" stroke="#fff" stroke-width="1.12" vector-effect="non-scaling-stroke"/><path d="M612 560Q640 490 735 488Q830 490 865 560H765V545H740V560z" fill="none" stroke="#fff" stroke-width="1.12" vector-effect="non-scaling-stroke"/><circle cx="693" cy="528" r="20" fill="none" stroke="#fff" stroke-width="1.12" vector-effect="non-scaling-stroke"/><circle cx="793" cy="530" r="22" fill="none" stroke="#fff" stroke-width="1.12" vector-effect="non-scaling-stroke"/><rect x="745" y="507" width="12" height="6" fill="#fff" stroke="none"/><path d="M822 488Q1000 570 1190 458L1185 478Q1000 540 850 495z" fill="none" stroke="#fff" stroke-width="1.12" vector-effect="non-scaling-stroke"/><rect x="995" y="516" width="15" height="6" fill="#fff" stroke="none"/><path d="M875 553H1020L945 588z" fill="none" stroke="#fff" stroke-width="1.12" vector-effect="non-scaling-stroke"/><circle cx="935" cy="565" r="0" fill="none" stroke="#fff" stroke-width="1.12" vector-effect="non-scaling-stroke"/><path d="M931 565H939M935 561V569" fill="none" stroke="#fff" stroke-width="1.12" vector-effect="non-scaling-stroke"/><path d="M928 565H942M935 558V572" fill="none" stroke="#fff" stroke-width="1.12" vector-effect="non-scaling-stroke"/><rect x="1183" y="485" width="202" height="73" fill="none" stroke="#fff" stroke-width="1.12" vector-effect="non-scaling-stroke"/><rect x="1197" y="520" width="8" height="10" fill="#fff" stroke="none"/><path d="M1040 550H1160V562H1515V580H1040z" fill="none" stroke="#fff" stroke-width="1.12" vector-effect="non-scaling-stroke"/><rect x="1500" y="563" width="10" height="9" fill="#fff" stroke="none"/><path d="M1360 465Q1570 425 1720 558L1700 555Q1560 450 1385 478z" fill="none" stroke="#fff" stroke-width="1.12" vector-effect="non-scaling-stroke"/><rect x="1548" y="464" width="12" height="6" fill="#fff" stroke="none"/><path d="M1422 505H1572L1495 538z" fill="none" stroke="#fff" stroke-width="1.12" vector-effect="non-scaling-stroke"/><path d="M1480 517H1494M1487 510V524" fill="none" stroke="#fff" stroke-width="1.12" vector-effect="non-scaling-stroke"/><rect x="1558" y="552" width="72" height="15" fill="#fff" stroke="none"/><rect x="1730" y="460" width="125" height="132" fill="none" stroke="#fff" stroke-width="1.12" vector-effect="non-scaling-stroke"/><rect x="1758" y="475" width="12" height="7" fill="#fff" stroke="none"/><rect x="50" y="625" width="1812" height="155" fill="none" stroke="#fff" stroke-width="1.12" vector-effect="non-scaling-stroke"/><path d="M65 650Q130 640 203 652L195 662Q130 655 75 665z" fill="none" stroke="#fff" stroke-width="1.12" vector-effect="non-scaling-stroke"/><rect x="68" y="650" width="12" height="7" fill="#fff" stroke="none"/><path d="M65 700L235 672L250 640L285 668L300 655L390 690H440L495 765H65z" fill="none" stroke="#fff" stroke-width="1.12" vector-effect="non-scaling-stroke"/><circle cx="170" cy="725" r="33" fill="none" stroke="#fff" stroke-width="1.12" vector-effect="non-scaling-stroke"/><circle cx="272" cy="715" r="33" fill="none" stroke="#fff" stroke-width="1.12" vector-effect="non-scaling-stroke"/><circle cx="360" cy="725" r="27" fill="none" stroke="#fff" stroke-width="1.12" vector-effect="non-scaling-stroke"/><rect x="93" y="710" width="12" height="8" fill="#fff" stroke="none"/><path d="M348 667H408L378 640z" fill="none" stroke="#fff" stroke-width="1.12" vector-effect="non-scaling-stroke"/><path d="M497 640H632Q625 720 520 742V730H497z" fill="none" stroke="#fff" stroke-width="1.12" vector-effect="non-scaling-stroke"/><circle cx="550" cy="692" r="22" fill="none" stroke="#fff" stroke-width="1.12" vector-effect="non-scaling-stroke"/><rect x="518" y="647" width="8" height="10" fill="#fff" stroke="none"/><rect x="752" y="627" width="73" height="14" fill="#fff" stroke="none"/><path d="M512 750H640L650 757H710L720 750H770V757H795V750H922V770H512z" fill="none" stroke="#fff" stroke-width="1.12" vector-effect="non-scaling-stroke"/><rect x="812" y="750" width="13" height="8" fill="#fff" stroke="none"/><path d="M958 775V677H975V715Q975 735 1000 735H1075Q1100 735 1100 715V677H1125V735Q1125 760 1150 760H1250Q1275 760 1275 735V677H1300V735Q1300 760 1325 760H1425Q1450 760 1450 735V677H1478V735Q1478 760 1503 760H1560Q1590 760 1590 735Q1590 705 1560 677H1590L1615 700Q1700 712 1790 706Q1845 712 1845 755H1748V775z" fill="none" stroke="#fff" stroke-width="1.12" vector-effect="non-scaling-stroke"/><rect x="980" y="740" width="17" height="7" fill="#fff" stroke="none"/><path d="M1478 635H1840L1855 660H1495z" fill="none" stroke="#fff" stroke-width="1.12" vector-effect="non-scaling-stroke"/><rect x="1520" y="642" width="15" height="8" fill="#fff" stroke="none"/></g><g transform="translate(930 460) scale(0.270270)"><rect x="180" y="78" width="1640" height="139" fill="none" stroke="#fff" stroke-width="1.12" vector-effect="non-scaling-stroke"/><rect x="205" y="82" width="65" height="15" fill="#fff" stroke="none"/><path d="M 208.6 137.5 L 374.7 119.8 L 374.7 110.9 Q 476.6 97.6 565.2 97.6 Q 653.8 95.4 720.2 124.2 Q 777.8 150.8 826.6 199.5 L 804.4 199.5 Q 773.4 157.4 746.8 157.4 Q 726.9 161.8 724.7 197.3 L 702.5 197.3 Q 695.9 184.0 676.0 181.8 Q 609.5 186.2 569.6 197.3 L 538.6 197.3 Q 520.9 184.0 432.3 179.6 Q 414.6 182.7 407.9 197.3 L 383.6 197.3 Q 374.7 177.3 361.4 177.3 Q 321.6 170.7 299.4 166.3 Q 277.2 170.7 272.8 197.3 L 252.9 197.3 Q 250.7 172.9 208.6 137.5 Z" fill="none" stroke="#fff" stroke-width="1.12" vector-effect="non-scaling-stroke"/><path d="M 805.6 143.5 L 971.7 125.8 L 971.7 116.9 Q 1073.6 103.6 1162.2 103.6 Q 1250.8 101.4 1317.2 130.2 Q 1374.8 156.8 1423.6 205.5 L 1401.4 205.5 Q 1370.4 163.4 1343.8 163.4 Q 1323.9 167.8 1321.7 203.3 L 1299.5 203.3 Q 1292.9 190.0 1273.0 187.8 Q 1206.5 192.2 1166.6 203.3 L 1135.6 203.3 Q 1117.9 190.0 1029.3 185.6 Q 1011.6 188.7 1004.9 203.3 L 980.6 203.3 Q 971.7 183.3 958.4 183.3 Q 918.5 176.7 896.4 172.3 Q 874.2 176.7 869.8 203.3 L 849.9 203.3 Q 847.7 178.9 805.6 143.5 Z" fill="none" stroke="#fff" stroke-width="1.12" vector-effect="non-scaling-stroke"/><path d="M423 143V126M417 133L423 126L429 133" fill="none" stroke="#fff" stroke-width="1.12" vector-effect="non-scaling-stroke"/><path d="M675 143V126M669 133L675 126L681 133" fill="none" stroke="#fff" stroke-width="1.12" vector-effect="non-scaling-stroke"/><rect x="512" y="127" width="38" height="15" rx="7.5" fill="none" stroke="#fff" stroke-width="1.12" vector-effect="non-scaling-stroke"/><rect x="250" y="140" width="15" height="10" fill="#fff" stroke="none"/><path d="M593 120V150" stroke="#7070ff" stroke-width="1.3" fill="none" vector-effect="non-scaling-stroke"/><path d="M578 135H608" stroke="#fff" stroke-width="1.2" fill="none" vector-effect="non-scaling-stroke"/><path d="M1010 138H1026M1018 130V146" fill="none" stroke="#fff" stroke-width="1.12" vector-effect="non-scaling-stroke"/><rect x="1108" y="132" width="38" height="15" rx="7.5" fill="none" stroke="#fff" stroke-width="1.12" vector-effect="non-scaling-stroke"/><path d="M1261 138H1278M1271 132L1278 138L1271 144" fill="none" stroke="#fff" stroke-width="1.12" vector-effect="non-scaling-stroke"/><rect x="850" y="148" width="15" height="6" fill="#fff" stroke="none"/><path d="M1188 123V153" stroke="#7070ff" stroke-width="1.3" fill="none" vector-effect="non-scaling-stroke"/><path d="M1173 138H1203" stroke="#fff" stroke-width="1.2" fill="none" vector-effect="non-scaling-stroke"/><rect x="67" y="428" width="1093" height="547" fill="none" stroke="#fff" stroke-width="1.12" vector-effect="non-scaling-stroke"/><path d="M570.0 472.0C404.1 456.6 296.7 442.2 223.5 440.0C130.8 440.0 82.0 454.8 82.0 477.0C82.0 499.2 130.8 514.0 223.5 514.0C296.7 511.8 404.1 497.4 570.0 482.0z" fill="none" stroke="#fff" stroke-width="1.12" vector-effect="non-scaling-stroke"/><path d="M237 442V472H243V442" fill="none" stroke="#fff" stroke-width="1.12" vector-effect="non-scaling-stroke"/><path d="M377 442V477H383V442" fill="none" stroke="#fff" stroke-width="1.12" vector-effect="non-scaling-stroke"/><path d="M242 512V509H248V512" fill="none" stroke="#fff" stroke-width="1.12" vector-effect="non-scaling-stroke"/><circle cx="230" cy="477" r="10" fill="none" stroke="#fff" stroke-width="1.12" vector-effect="non-scaling-stroke"/><path d="M216 477H244M230 463V491" fill="none" stroke="#fff" stroke-width="1.12" vector-effect="non-scaling-stroke"/><rect x="273" y="470" width="37" height="14" rx="7.0" fill="none" stroke="#fff" stroke-width="1.12" vector-effect="non-scaling-stroke"/><rect x="108" y="471" width="16" height="5" fill="#fff" stroke="none"/><rect x="162" y="472" width="18" height="5" fill="#fff" stroke="none"/><path d="M150 486V469M144 476L150 469L156 476" fill="none" stroke="#fff" stroke-width="1.12" vector-effect="non-scaling-stroke"/><path d="M400 486V469M394 476L400 469L406 476" fill="none" stroke="#fff" stroke-width="1.12" vector-effect="non-scaling-stroke"/><path d="M566.0 555.0C400.1 539.6 292.7 525.2 219.5 523.0C126.8 523.0 78.0 537.8 78.0 560.0C78.0 582.2 126.8 597.0 219.5 597.0C292.7 594.8 400.1 580.4 566.0 565.0z" fill="none" stroke="#fff" stroke-width="1.12" vector-effect="non-scaling-stroke"/><path d="M237 525V555H243V525" fill="none" stroke="#fff" stroke-width="1.12" vector-effect="non-scaling-stroke"/><path d="M377 525V560H383V525" fill="none" stroke="#fff" stroke-width="1.12" vector-effect="non-scaling-stroke"/><path d="M242 595V592H248V595" fill="none" stroke="#fff" stroke-width="1.12" vector-effect="non-scaling-stroke"/><circle cx="224" cy="560" r="10" fill="none" stroke="#fff" stroke-width="1.12" vector-effect="non-scaling-stroke"/><path d="M210 560H238M224 546V574" fill="none" stroke="#fff" stroke-width="1.12" vector-effect="non-scaling-stroke"/><rect x="273" y="553" width="37" height="14" rx="7.0" fill="none" stroke="#fff" stroke-width="1.12" vector-effect="non-scaling-stroke"/><rect x="108" y="554" width="16" height="5" fill="#fff" stroke="none"/><rect x="162" y="555" width="18" height="5" fill="#fff" stroke="none"/><path d="M133 560H150M143 554L150 560L143 566" fill="none" stroke="#fff" stroke-width="1.12" vector-effect="non-scaling-stroke"/><path d="M385 560H402M395 554L402 560L395 566" fill="none" stroke="#fff" stroke-width="1.12" vector-effect="non-scaling-stroke"/><path d="M566.0 650.0C400.1 634.6 292.7 620.2 219.5 618.0C126.8 618.0 78.0 632.8 78.0 655.0C78.0 677.2 126.8 692.0 219.5 692.0C292.7 689.8 400.1 675.4 566.0 660.0z" fill="none" stroke="#fff" stroke-width="1.12" vector-effect="non-scaling-stroke"/><path d="M237 620V650H243V620" fill="none" stroke="#fff" stroke-width="1.12" vector-effect="non-scaling-stroke"/><path d="M377 620V655H383V620" fill="none" stroke="#fff" stroke-width="1.12" vector-effect="non-scaling-stroke"/><path d="M242 690V687H248V690" fill="none" stroke="#fff" stroke-width="1.12" vector-effect="non-scaling-stroke"/><circle cx="224" cy="655" r="10" fill="none" stroke="#fff" stroke-width="1.12" vector-effect="non-scaling-stroke"/><path d="M210 655H238M224 641V669" fill="none" stroke="#fff" stroke-width="1.12" vector-effect="non-scaling-stroke"/><rect x="273" y="648" width="37" height="14" rx="7.0" fill="none" stroke="#fff" stroke-width="1.12" vector-effect="non-scaling-stroke"/><rect x="108" y="649" width="16" height="5" fill="#fff" stroke="none"/><rect x="162" y="650" width="18" height="5" fill="#fff" stroke="none"/><path d="M133 655H150M143 649L150 655L143 661" fill="none" stroke="#fff" stroke-width="1.12" vector-effect="non-scaling-stroke"/><path d="M385 655H402M395 649L402 655L395 661" fill="none" stroke="#fff" stroke-width="1.12" vector-effect="non-scaling-stroke"/><path d="M566.0 747.0C400.1 731.6 292.7 717.2 219.5 715.0C126.8 715.0 78.0 729.8 78.0 752.0C78.0 774.2 126.8 789.0 219.5 789.0C292.7 786.8 400.1 772.4 566.0 757.0z" fill="none" stroke="#fff" stroke-width="1.12" vector-effect="non-scaling-stroke"/><path d="M237 717V747H243V717" fill="none" stroke="#fff" stroke-width="1.12" vector-effect="non-scaling-stroke"/><path d="M377 717V752H383V717" fill="none" stroke="#fff" stroke-width="1.12" vector-effect="non-scaling-stroke"/><path d="M242 787V784H248V787" fill="none" stroke="#fff" stroke-width="1.12" vector-effect="non-scaling-stroke"/><circle cx="224" cy="752" r="10" fill="none" stroke="#fff" stroke-width="1.12" vector-effect="non-scaling-stroke"/><path d="M210 752H238M224 738V766" fill="none" stroke="#fff" stroke-width="1.12" vector-effect="non-scaling-stroke"/><rect x="273" y="745" width="37" height="14" rx="7.0" fill="none" stroke="#fff" stroke-width="1.12" vector-effect="non-scaling-stroke"/><rect x="108" y="746" width="16" height="5" fill="#fff" stroke="none"/><rect x="162" y="747" width="18" height="5" fill="#fff" stroke="none"/><path d="M133 752H150M143 746L150 752L143 758" fill="none" stroke="#fff" stroke-width="1.12" vector-effect="non-scaling-stroke"/><path d="M385 752H402M395 746L402 752L395 758" fill="none" stroke="#fff" stroke-width="1.12" vector-effect="non-scaling-stroke"/><rect x="610" y="442" width="77" height="73" fill="none" stroke="#fff" stroke-width="1.12" vector-effect="non-scaling-stroke"/><circle cx="648" cy="479" r="12" fill="none" stroke="#fff" stroke-width="1.12" vector-effect="non-scaling-stroke"/><rect x="610" y="523" width="77" height="75" fill="none" stroke="#fff" stroke-width="1.12" vector-effect="non-scaling-stroke"/><circle cx="648" cy="561" r="12" fill="none" stroke="#fff" stroke-width="1.12" vector-effect="non-scaling-stroke"/><path d="M718 438H1150V463H935V605L718 635V593H830L868 555V515L830 478H718z" fill="none" stroke="#fff" stroke-width="1.12" vector-effect="non-scaling-stroke"/><path d="M735 612H757M746 601V623" fill="none" stroke="#fff" stroke-width="1.12" vector-effect="non-scaling-stroke"/><rect x="893" y="455" width="12" height="7" fill="#fff" stroke="none"/><rect x="970" y="478" width="70" height="184" fill="none" stroke="#fff" stroke-width="1.12" vector-effect="non-scaling-stroke"/><rect x="1067" y="478" width="70" height="184" fill="none" stroke="#fff" stroke-width="1.12" vector-effect="non-scaling-stroke"/><rect x="995" y="488" width="12" height="6" fill="#fff" stroke="none"/><rect x="1092" y="488" width="13" height="6" fill="#fff" stroke="none"/><path d="M708 693H1142V720H925V860L708 890V850H822L858 815V773L822 735H708z" fill="none" stroke="#fff" stroke-width="1.12" vector-effect="non-scaling-stroke"/><path d="M727 868H748M737 857V879" fill="none" stroke="#fff" stroke-width="1.12" vector-effect="non-scaling-stroke"/><rect x="885" y="710" width="12" height="7" fill="#fff" stroke="none"/><path d="M962 757H972V762H998V757H1008V845H998V840H972V845H962z" fill="none" stroke="#fff" stroke-width="1.12" vector-effect="non-scaling-stroke"/><rect x="972" y="770" width="26" height="62" fill="none" stroke="#fff" stroke-width="1.12" vector-effect="non-scaling-stroke"/><path d="M1027 757H1037V762H1063V757H1073V845H1063V840H1037V845H1027z" fill="none" stroke="#fff" stroke-width="1.12" vector-effect="non-scaling-stroke"/><rect x="1037" y="770" width="26" height="62" fill="none" stroke="#fff" stroke-width="1.12" vector-effect="non-scaling-stroke"/><path d="M1090 757H1100V762H1126V757H1136V845H1126V840H1100V845H1090z" fill="none" stroke="#fff" stroke-width="1.12" vector-effect="non-scaling-stroke"/><rect x="1100" y="770" width="26" height="62" fill="none" stroke="#fff" stroke-width="1.12" vector-effect="non-scaling-stroke"/><path d="M1085 868H1095V873H1123V868H1133V960H1123V955H1095V960H1085z" fill="none" stroke="#fff" stroke-width="1.12" vector-effect="non-scaling-stroke"/><rect x="1095" y="881" width="28" height="66" fill="none" stroke="#fff" stroke-width="1.12" vector-effect="non-scaling-stroke"/><path d="M786.5 918.3L833.5 884.3L834.0 918.3L821.5 924.8H796.5z" fill="none" stroke="#fff" stroke-width="1.12" vector-effect="non-scaling-stroke"/><path d="M858.8 915L905.8 881L906.3 915L893.8 921.5H868.8z" fill="none" stroke="#fff" stroke-width="1.12" vector-effect="non-scaling-stroke"/><path d="M929.5 895.8L976.5 861.8L977.0 895.8L964.5 902.3H939.5z" fill="none" stroke="#fff" stroke-width="1.12" vector-effect="non-scaling-stroke"/><path d="M1003.4 895.8L1050.4 861.8L1050.9 895.8L1038.4 902.3H1013.4z" fill="none" stroke="#fff" stroke-width="1.12" vector-effect="non-scaling-stroke"/><path d="M799.4 960L846.4 926L846.9 960L834.4 966.5H809.4z" fill="none" stroke="#fff" stroke-width="1.12" vector-effect="non-scaling-stroke"/><path d="M871.7 953.6L918.7 919.6L919.2 953.6L906.7 960.1H881.7z" fill="none" stroke="#fff" stroke-width="1.12" vector-effect="non-scaling-stroke"/><path d="M934.3 945.6L981.3 911.6L981.8 945.6L969.3 952.1H944.3z" fill="none" stroke="#fff" stroke-width="1.12" vector-effect="non-scaling-stroke"/><path d="M1006.6 945.6L1053.6 911.6L1054.1 945.6L1041.6 952.1H1016.6z" fill="none" stroke="#fff" stroke-width="1.12" vector-effect="non-scaling-stroke"/></g></svg>
<svg style="left:8px;top:914px;" width="90" height="80" viewBox="8 914 90 80"><path d="M19.500 933.400V983.200H70" stroke="#f2f2f2" stroke-width="1.15" fill="none"/><rect x="15.400" y="978.700" width="9.100" height="8.700" stroke="#f2f2f2" stroke-width="1.15" fill="none"/><path d="M21.400 916.200l6.200 6.800 6.200-6.800M27.600 923v5.800" stroke="#f2f2f2" stroke-width="1.15" fill="none"/><path d="M74.300 969.300l12.600 12.600M86.900 969.300l-12.600 12.600" stroke="#f2f2f2" stroke-width="1.15" fill="none"/></svg>
<svg style="left:1760px;top:230px;" width="161" height="460" viewBox="1760 230 161 460"><circle cx="1836.100" cy="300.600" r="53.400" fill="none" stroke="#474e58" stroke-width="13.200"/><rect x="1810.400" y="274.400" width="51.400" height="51" fill="#b4b6b9"/><rect x="1819.600" y="284" width="32.100" height="31.300" fill="#a7abb3"/><rect x="1812.300" y="387.700" width="47.700" height="16.500" rx="3.500" fill="#8b8f98" stroke="#a2a6ae" stroke-width="1"/><path d="M1846.400 393h8.800l-4.400 5z" fill="#9a9ea7" stroke="#b6b9bf" stroke-width=".9"/><rect x="1882.400" y="429.400" width="32.400" height="250.800" rx="4" fill="#686c73" stroke="#777b82" stroke-width="1"/><circle cx="1908.800" cy="435.200" r="2.200" stroke="#53575f" fill="none" stroke-width="1.200"/><circle cx="1908.800" cy="674.400" r="2.200" stroke="#53575f" fill="none" stroke-width="1.200"/><circle cx="1898.400" cy="461" r="8.600" stroke="#53575f" fill="none" stroke-width="1.200" stroke-width="1.700"/><circle cx="1898.400" cy="461" r="4.800" stroke="#53575f" fill="none" stroke-width="1.200"/><path d="M1890 461v-9.400h13" stroke="#53575f" fill="none" stroke-width="1.200"/><path d="M1890.600 502c-1.600-3-2.600-6-1-7 1.400-.6 2.400 1.400 3 3v-7.400c0-2 2.400-2 2.400 0v-2.600c0-2 2.600-2 2.600 0v2.600c0-2 2.600-2 2.600 0v3c0-1.600 2.400-1.600 2.400.4v7.400c0 3-1.400 5-3 6h-6c-1.400-1-2.400-3.400-3-5.400z" stroke="#53575f" fill="none" stroke-width="1.200"/><path d="M1888.600 520.600l15 15M1903.600 520.600l-15 15" stroke="#53575f" fill="none" stroke-width="1.200"/><circle cx="1904.400" cy="534" r="3.400" fill="#6b6f76" stroke="#53575f" stroke-width="1.200"/><path d="M1907 536.600l3 3" stroke="#53575f" fill="none" stroke-width="1.200" stroke-width="1.800"/><ellipse cx="1898.400" cy="571.600" rx="9.400" ry="3.600" stroke="#53575f" fill="none" stroke-width="1.200"/><path d="M1898.400 558v22M1895.400 561.400l3-3.800 3 3.800M1895.400 577l3 3.600 3-3.600" stroke="#53575f" fill="none" stroke-width="1.200"/><path d="M1888.800 602.400v9.800c0 5.600 19.200 5.600 19.200 0v-9.800" stroke="#53575f" fill="none" stroke-width="1.200"/><rect x="1891.400" y="597.600" width="14" height="9" rx="1" fill="#73777e" stroke="#53575f"/><ellipse cx="1898.400" cy="602.400" rx="9.600" ry="3" stroke="#53575f" fill="none" stroke-width="1.200"/><rect x="1888.400" y="637.800" width="5.400" height="4.800" stroke="#53575f" fill="none" stroke-width="1.200"/><rect x="1895.800" y="637.800" width="5.400" height="4.800" stroke="#53575f" fill="none" stroke-width="1.200"/><rect x="1903.200" y="637.800" width="5.400" height="4.800" stroke="#53575f" fill="none" stroke-width="1.200"/><rect x="1888.400" y="646.400" width="16" height="12.400" stroke="#53575f" fill="none" stroke-width="1.200"/><path d="M1894 649.400v6.400l5.600-3.200z" fill="#53575f"/><path d="M1896.800 479.6h3.200l-1.600 2z" fill="#4e5259"/><path d="M1896.800 549.4h3.200l-1.600 2z" fill="#4e5259"/><path d="M1896.800 587.4h3.200l-1.600 2z" fill="#4e5259"/><path d="M1896.800 626.6h3.200l-1.600 2z" fill="#4e5259"/></svg>
<div class="t" style="left:1827.80px;top:233.82px;font-size:21px;line-height:21px;color:#c3c5c8;font-weight:700;">N</div>
<div class="t" style="left:1828.20px;top:346.82px;font-size:21px;line-height:21px;color:#c3c5c8;font-weight:700;">S</div>
<div class="t" style="left:1769.98px;top:290.02px;font-size:21px;line-height:21px;color:#c3c5c8;font-weight:700;">W</div>
<div class="t" style="left:1884.00px;top:290.02px;font-size:21px;line-height:21px;color:#c3c5c8;font-weight:700;">E</div>
<div class="t" style="left:1825.54px;top:293.35px;font-size:14px;line-height:14px;color:#4f5666;font-weight:700;transform:scaleX(.74);transform-origin:0 0;">TOP</div>
<div class="t" style="left:1816.45px;top:390.47px;font-size:11.5px;line-height:11.5px;color:#474c56;letter-spacing:-1.226px;">WCS</div>
<div style="left:448px;top:919px;width:788.4px;height:15px;background:rgba(125,128,134,.52);border-radius:2px;"></div>
<div style="left:448px;top:939px;width:60.4px;height:15px;background:rgba(125,128,134,.52);border-radius:2px;"></div>
<div style="left:448px;top:959px;width:60.4px;height:15px;background:rgba(125,128,134,.52);border-radius:2px;"></div>
<div class="t" style="left:450.00px;top:920.54px;font-size:11.65px;line-height:11.65px;color:#d9dadc;font-family:'Liberation Mono',monospace;">Autodesk DWG.  This file is a TrustedDWG last saved by an Autodesk application or Autodesk licensed application.</div>
<div class="t" style="left:449.36px;top:940.54px;font-size:11.65px;line-height:11.65px;color:#f2f2f2;font-family:'Liberation Mono',monospace;">Command:</div>
<div class="t" style="left:449.36px;top:960.54px;font-size:11.65px;line-height:11.65px;color:#f2f2f2;font-family:'Liberation Mono',monospace;">Command:</div>
<div style="left:441.4px;top:977.6px;width:1090px;height:25.6px;background:#1b2027;border-radius:0 0 3px 3px;"></div>
<div style="left:442px;top:978px;width:1089px;height:24.8px;background:#c4c6c6;border-radius:0 0 2px 2px;"></div>
<svg style="left:386px;top:976px;" width="1150" height="30" viewBox="386 976 1150 30"><rect x="390.4" y="981.0" width="1" height="1.1" fill="#b4b8bf"/><rect x="392.4" y="981.0" width="1" height="1.1" fill="#b4b8bf"/><rect x="394.4" y="981.0" width="1" height="1.1" fill="#b4b8bf"/><rect x="390.4" y="983.2" width="1" height="1.1" fill="#b4b8bf"/><rect x="392.4" y="983.2" width="1" height="1.1" fill="#b4b8bf"/><rect x="394.4" y="983.2" width="1" height="1.1" fill="#b4b8bf"/><rect x="390.4" y="985.4" width="1" height="1.1" fill="#b4b8bf"/><rect x="392.4" y="985.4" width="1" height="1.1" fill="#b4b8bf"/><rect x="394.4" y="985.4" width="1" height="1.1" fill="#b4b8bf"/><rect x="390.4" y="987.6" width="1" height="1.1" fill="#b4b8bf"/><rect x="392.4" y="987.6" width="1" height="1.1" fill="#b4b8bf"/><rect x="394.4" y="987.6" width="1" height="1.1" fill="#b4b8bf"/><rect x="390.4" y="989.8" width="1" height="1.1" fill="#b4b8bf"/><rect x="392.4" y="989.8" width="1" height="1.1" fill="#b4b8bf"/><rect x="394.4" y="989.8" width="1" height="1.1" fill="#b4b8bf"/><rect x="390.4" y="992.0" width="1" height="1.1" fill="#b4b8bf"/><rect x="392.4" y="992.0" width="1" height="1.1" fill="#b4b8bf"/><rect x="394.4" y="992.0" width="1" height="1.1" fill="#b4b8bf"/><rect x="390.4" y="994.2" width="1" height="1.1" fill="#b4b8bf"/><rect x="392.4" y="994.2" width="1" height="1.1" fill="#b4b8bf"/><rect x="394.4" y="994.2" width="1" height="1.1" fill="#b4b8bf"/><rect x="390.4" y="996.4" width="1" height="1.1" fill="#b4b8bf"/><rect x="392.4" y="996.4" width="1" height="1.1" fill="#b4b8bf"/><rect x="394.4" y="996.4" width="1" height="1.1" fill="#b4b8bf"/><path d="M401.400 986l7.200 7.200M408.600 986l-7.200 7.200" stroke="#c9ccd2" stroke-width="1.700"/><path d="M423.800 997.600l6.400-6.600" stroke="#c9ccd2" stroke-width="2.400" stroke-linecap="round"/><path d="M433.600 985.400a3.600 3.600 0 1 0 1.800 3l-2.600 1.400-1.600-1.800z" fill="#c9ccd2"/><rect x="446.800" y="985.800" width="15.400" height="10.600" fill="#c4c6c6" stroke="#4a4e55" stroke-width="1.200"/><path d="M446.800 986.400h15.400" stroke="#4a4e55" stroke-width="2"/><path d="M449.400 989.800l2.400 1.800-2.400 1.800M452.600 994h3.200" stroke="#4a4e55" stroke-width="1" fill="none"/><path d="M464.800 989.400h5.600l-2.800 3.400z" fill="#4a4e55"/><path d="M1519.800 992.200h7.600l-3.800-4z" fill="#4c5058"/></svg>
<div class="t" style="left:477.85px;top:984.34px;font-size:11.65px;line-height:11.65px;color:#5f636b;font-style:italic;font-family:'Liberation Mono',monospace;">Type a command</div>
<div style="left:0px;top:0px;width:1921px;height:38px;background:#222933;"></div>
<div style="left:0px;top:0px;width:39px;height:33px;background:linear-gradient(#cfcfcf,#b0b0b0 45%,#7e7e7e);border-right:1px solid #111;border-bottom:1px solid #0a0a0a;box-shadow:inset -1px 0 0 #d4d4d4, inset 0 -1px 0 #a8a8a8;"></div>
<svg style="left:0px;top:0px;" width="40" height="34" viewBox="0 0 40 34"><path d="M13.400 -5H20L27.400 22H20.600L18.400 14L11.400 17.200L9.600 22H3.600Z" fill="#cb1f2b"/><path d="M15.900 1.500L17.700 10.600L12.200 13Z" fill="#b9a7a2"/><path d="M13.400 -5L3.600 22H6.400L15.400 -3Z" fill="#a3141e"/><path d="M18.400 14L11.400 17.200L11.900 15.400L18 12.400Z" fill="#e8484e"/><path d="M29.7 11h7.3l-3.65 4z" fill="#2b2b2b"/></svg>
<svg style="left:0px;top:0px;" width="340" height="14" viewBox="0 0 340 14"><path d="M48.8 0h11.2v2.4h5v7.6h-16.2z" fill="#dcdcdc"/><path d="M60.600 0h3.700v1h-3.700z" fill="#f4f4f4"/><path d="M73.3 0h11.7v3h-11.7z" fill="#c9c9c9"/><path d="M76.7 2.9h12l-3.7 7.9h-12z" fill="#dedede"/><path d="M97 0h13v9.6h-13z" fill="#d6d6d6"/><path d="M101.7 0h4.2v9.6h-4.2z" fill="#878787"/><path d="M104 4.6h2.2v3.4h-2.2z" fill="#fff"/><path d="M106.6 4.8v3.2h3.4" stroke="#fff" stroke-width="1.4" fill="none"/><path d="M109.6 5.8l2.6 2.3-2.6 2.3z" fill="#fff"/><path d="M121.3 0h15.7v12h-14l-1.7-1.5z" fill="#b9b9b9"/><path d="M124.6 0h8.7v2h-8.7z" fill="#fafafa"/><path d="M124.6 7.2h8.7v4.6h-8.7z" fill="#fafafa" stroke="#333" stroke-width=".6"/><path d="M126 8.3h1.6v2.4h-1.6z" fill="#333"/><path d="M145.4 0h9v11h-9z" fill="#b9b9b9"/><path d="M148 0h7v1.6h-7z" fill="#fafafa"/><path d="M148 6.6h5v4.2h-5z" fill="#fafafa" stroke="#333" stroke-width=".6"/><path d="M158.6 1.6l2.6 2-6.4 7.4-3 1 .6-3z" fill="#f2d574" stroke="#222933" stroke-width=".5"/><path d="M158.6 1.6l2.6 2-1.4 1.6-2.6-2z" fill="#ea7070"/><path d="M170 0h10v11.2h-10z" fill="#d5d5d5"/><path d="M171 0h8v9.6h-8z" fill="#878787"/><path d="M176.7 5h3l.8 1h4.5v5.2h-8.3z" fill="#f2d574"/><path d="M178.2 7.2h7.4l-1.4 4h-7.5z" fill="#f8e08c"/><path d="M196.7 0h10.3v11.7h-10.3z" fill="#e2e2e2"/><path d="M197.8 0h8.1v9.6h-8.1z" fill="#7a828c"/><path d="M200.6 10.2h2.6v.8h-2.6z" fill="#555"/><path d="M195 .6h5.5v-1.6l3.2 2.6-3.2 2.6v-1.6h-5.5z" fill="#5aa2e2"/><path d="M219 0h12v2.4h-12z" fill="#fafafa" stroke="#222" stroke-width=".5"/><path d="M217 2h16.3v6.8h-16.3z" fill="#f2f2f2"/><path d="M220 6.7h10.4v5h-10.4z" fill="#9cc8f2" stroke="#fff" stroke-width=".8"/><path d="M240.8 2.6l6.6-5v3c5 0 9 1.6 9.6 7.2-1.8-2.8-4.6-3.4-9.6-3.4v3.2z" fill="#d9d9d9"/><path d="M264.6 2.3h4.2l-2.1 2.7z" fill="#d2d2d2"/><path d="M292.6 2.6l-6.6-5v3c-5 0-9 1.6-9.6 7.2 1.8-2.8 4.6-3.4 9.6-3.4v3.2z" fill="#6b717c"/><path d="M300.4 2.3h4.2l-2.1 2.7z" fill="#8b8f98"/><path d="M313 0h8.3v1.3h-8.3z" fill="#d9d9d9"/><path d="M313 2.9h8.3l-4.15 4.2z" fill="#d9d9d9"/></svg>
<div class="t" style="left:690.48px;top:-0.96px;font-size:12px;line-height:12px;color:#e4e6e8;letter-spacing:-0.163px;">Autodesk AutoCAD 2020</div>
<div class="t" style="left:831.89px;top:-0.96px;font-size:12px;line-height:12px;color:#e4e6e8;letter-spacing:-0.117px;">ChubCub 48 Cut Parts.dwg</div>
<svg style="left:1342px;top:0px;" width="8" height="10" viewBox="0 0 8 10"><path d="M2 .5l4 3.5-4 3.5z" fill="#d0d0d0"/></svg>
<div style="left:1355px;top:0px;width:178px;height:14px;background:#48505f;"></div>
<div class="t" style="left:1357.01px;top:-1.11px;font-size:11px;line-height:11px;color:#9ba1ad;letter-spacing:-0.172px;font-style:italic;">Type a keyword or phrase</div>
<svg style="left:1537px;top:0px;" width="18" height="12" viewBox="0 0 18 12"><path d="M2 0h4.6v10.4h-4.6zM9.8 0h4.6v10.4h-4.6z" fill="#e2e2e2"/><path d="M6.6 0h3.2v5h-3.2z" fill="#bdbdbd"/><path d="M3.2 7h2v2.4h-2zM11 7h2v2.4h-2z" fill="#222933"/></svg>
<svg style="left:1561px;top:0px;" width="18" height="12" viewBox="0 0 18 12"><path d="M5.4 0h6.4v1.6c0 2-1.2 3.6-3.2 3.6s-3.2-1.6-3.2-3.6z" fill="#e6e6e6"/><path d="M1.4 10.6c.4-3 2.6-4.6 5-5l2.2 1.4 2.2-1.4c2.4.4 4.6 2 5 5z" fill="#e6e6e6"/></svg>
<div class="t" style="left:1582.96px;top:-0.96px;font-size:12px;line-height:12px;color:#e6e6e6;letter-spacing:-0.089px;">Sign In</div>
<svg style="left:1665px;top:0px;" width="10" height="10" viewBox="0 0 10 10"><path d="M2.5 3h5l-2.5 3z" fill="#d0d0d0"/></svg>
<svg style="left:1684px;top:0px;" width="18" height="12" viewBox="0 0 18 12"><path d="M2 .5h2.4l1 5.5h8l1.6-5" stroke="#e2e2e2" stroke-width="1.6" fill="none"/><path d="M4.8 0h10v4.8h-9z" fill="#e2e2e2"/><circle cx="6.4" cy="8.6" r="1.3" fill="#e2e2e2"/><circle cx="12.8" cy="8.6" r="1.3" fill="#e2e2e2"/></svg>
<svg style="left:1706px;top:0px;" width="22" height="12" viewBox="0 0 22 12"><path d="M10.5 -3L3 8.6h15z" fill="none" stroke="#e2e2e2" stroke-width="1.8" stroke-linejoin="round"/><circle cx="3.4" cy="8.4" r="2" fill="#e2e2e2"/><circle cx="17.6" cy="8.4" r="2" fill="#e2e2e2"/></svg>
<svg style="left:1726px;top:0px;" width="10" height="10" viewBox="0 0 10 10"><path d="M2.5 3h5l-2.5 3z" fill="#d0d0d0"/></svg>
<div style="left:1744px;top:0px;width:1px;height:12px;background:#4a5160;"></div>
<svg style="left:1752px;top:0px;" width="20" height="12" viewBox="0 0 20 12"><circle cx="9.5" cy="2.6" r="7.4" fill="#e4e6ea"/><path d="M7.2 .8c0-3.4 5-3.4 5 0 0 1.8-2.4 1.8-2.4 3.8" stroke="#2a4a8a" stroke-width="2" fill="none"/><circle cx="9.8" cy="7" r="1.2" fill="#2a4a8a"/></svg>
<svg style="left:1773px;top:0px;" width="10" height="10" viewBox="0 0 10 10"><path d="M2.5 3h5l-2.5 3z" fill="#d0d0d0"/></svg>
<div style="left:1851px;top:8px;width:11px;height:2px;background:#e2e2e2;"></div>
<svg style="left:1874px;top:0px;" width="18" height="12" viewBox="0 0 18 12"><path d="M5.5 -1h9v7h-3" stroke="#e2e2e2" stroke-width="1.6" fill="none"/><path d="M2 3.2h9.4v7h-9.4z" stroke="#e2e2e2" stroke-width="1.6" fill="#222933"/></svg>
<svg style="left:1898px;top:0px;" width="18" height="12" viewBox="0 0 18 12"><path d="M2.5 -1.5L14 10M14 -1.5L2.5 10" stroke="#e6e6e6" stroke-width="1.9"/></svg>
<div style="left:45px;top:20px;width:51px;height:18px;background:#3b4453;"></div>
<div class="t" style="left:53.32px;top:22.04px;font-size:12px;line-height:12px;color:#ffffff;letter-spacing:0.769px;">Home</div>
<div class="t" style="left:106.19px;top:22.04px;font-size:12px;line-height:12px;color:#d3d6db;letter-spacing:-0.023px;">Insert</div>
<div class="t" style="left:156.38px;top:22.04px;font-size:12px;line-height:12px;color:#d3d6db;letter-spacing:0.117px;">Annotate</div>
<div class="t" style="left:224.42px;top:22.04px;font-size:12px;line-height:12px;color:#d3d6db;letter-spacing:0.254px;">Parametric</div>
<div class="t" style="left:301.95px;top:22.04px;font-size:12px;line-height:12px;color:#d3d6db;letter-spacing:-0.056px;">View</div>
<div class="t" style="left:346.22px;top:22.04px;font-size:12px;line-height:12px;color:#d3d6db;letter-spacing:0.311px;">Manage</div>
<div class="t" style="left:409.73px;top:22.04px;font-size:12px;line-height:12px;color:#d3d6db;letter-spacing:0.447px;">Output</div>
<div class="t" style="left:468.38px;top:22.04px;font-size:12px;line-height:12px;color:#d3d6db;letter-spacing:0.262px;">Add-ins</div>
<div class="t" style="left:529.99px;top:22.04px;font-size:12px;line-height:12px;color:#d3d6db;letter-spacing:0.077px;">Collaborate</div>
<div class="t" style="left:610.62px;top:22.04px;font-size:12px;line-height:12px;color:#d3d6db;letter-spacing:-0.372px;">Express Tools</div>
<div class="t" style="left:699.95px;top:22.04px;font-size:12px;line-height:12px;color:#d3d6db;letter-spacing:-0.080px;">Vault</div>
<div class="t" style="left:745.02px;top:22.04px;font-size:12px;line-height:12px;color:#d3d6db;letter-spacing:-0.053px;">Featured Apps</div>
<svg style="left:853px;top:22px;" width="26" height="12" viewBox="0 0 26 12"><rect x="1" y="2.2" width="13.4" height="6.6" rx="1.6" fill="#e2e2e2"/><path d="M4.6 7l3.1-3.2 3.1 3.2z" fill="#222933"/><path d="M18.4 5h4.6l-2.3 2.8z" fill="#d0d0d0"/></svg>
<div style="left:0px;top:38px;width:1921px;height:97px;background:#222933;"></div>
<div style="left:0px;top:38px;width:1608px;height:97px;background:#3b4453;"></div>
<div style="left:0px;top:38px;width:1px;height:97px;background:#2a313c;"></div>
<div style="left:223.6px;top:38px;width:1.6px;height:97px;background:#2c333f;"></div>
<div style="left:473.6px;top:38px;width:1.6px;height:97px;background:#2c333f;"></div>
<div style="left:663px;top:38px;width:1.6px;height:97px;background:#2c333f;"></div>
<div style="left:936px;top:38px;width:1.6px;height:97px;background:#2c333f;"></div>
<div style="left:1097.4px;top:38px;width:1.6px;height:97px;background:#2c333f;"></div>
<div style="left:1361.6px;top:38px;width:1.6px;height:97px;background:#2c333f;"></div>
<div style="left:1430.6px;top:38px;width:1.6px;height:97px;background:#2c333f;"></div>
<div style="left:1528px;top:38px;width:1.6px;height:97px;background:#2c333f;"></div>
<div style="left:1405px;top:91.2px;width:24px;height:21.4px;background:#3d5f86;border:1px solid #7bb4e8;box-sizing:border-box;"></div>
<div style="left:726.5px;top:43.8px;width:207px;height:20.4px;background:#4b5569;border:1px solid #5b657a;box-sizing:border-box;"></div>
<div style="left:1181px;top:43.8px;width:178.6px;height:20.3px;background:#4b5569;border:1px solid #5b657a;box-sizing:border-box;"></div>
<div style="left:1181px;top:67.1px;width:178.6px;height:20.3px;background:#4b5569;border:1px solid #5b657a;box-sizing:border-box;"></div>
<div style="left:1181px;top:90.8px;width:178.6px;height:20.3px;background:#4b5569;border:1px solid #5b657a;box-sizing:border-box;"></div>
<div style="left:1161.9px;top:44.9px;width:16.2px;height:16.2px;background:conic-gradient(#f7c61c,#f98f2a 55deg,#f0504c 105deg,#a34be0 165deg,#3b70e8 215deg,#21bfb6 262deg,#4fc45a 312deg,#f7c61c 360deg);border-radius:50%;"></div>
<div style="left:1193px;top:46.2px;width:16px;height:15.6px;background:#ffffff;"></div>
<div style="left:1184px;top:76px;width:64px;height:1.2px;background:#e6e6e6;"></div>
<div style="left:1184px;top:101px;width:64px;height:1.2px;background:#e6e6e6;"></div>
<svg style="left:0px;top:38px;" width="1608" height="97" viewBox="0 38 1608 97"><path d="M8 75L35.5 47.5" stroke="#dfe1e4" fill="none" stroke-width="1.3"/><rect x="6.00" y="73.80" width="3.2" height="3.2" fill="#7fb9e6"/><rect x="34.90" y="44.90" width="3.2" height="3.2" fill="#7fb9e6"/><path d="M52 68.5H69M72 53.6A7.45 7.45 0 0 1 72 68.5" stroke="#dfe1e4" fill="none" stroke-width="1.3"/><rect x="48.80" y="66.90" width="3.2" height="3.2" fill="#7fb9e6"/><rect x="68.80" y="66.90" width="3.2" height="3.2" fill="#7fb9e6"/><rect x="68.80" y="52.00" width="3.2" height="3.2" fill="#7fb9e6"/><circle cx="114.6" cy="60.4" r="15.3" stroke="#dfe1e4" fill="none" stroke-width="1.3"/><path d="M115.5 59.6L122 53" stroke="#6fb5e6" stroke-width="1.5"/><path d="M124.2 50.8l-1 4.6-3.6-3.6z" fill="#6fb5e6"/><rect x="112.80" y="59.20" width="3.2" height="3.2" fill="#7fb9e6"/><path d="M148.6 72.4Q150.5 50.5 173.6 47.8" stroke="#dfe1e4" fill="none" stroke-width="1.3"/><rect x="146.60" y="72.70" width="3.2" height="3.2" fill="#7fb9e6"/><rect x="154.90" y="53.80" width="3.2" height="3.2" fill="#7fb9e6"/><rect x="173.70" y="46.00" width="3.2" height="3.2" fill="#7fb9e6"/><rect x="187.6" y="49.8" width="13" height="8.8" stroke="#dfe1e4" fill="none" stroke-width="1.3"/><rect x="185.90" y="48.10" width="2.6" height="2.6" fill="#7fb9e6"/><rect x="199.50" y="57.50" width="2.6" height="2.6" fill="#7fb9e6"/><path d="M193.2 72.7A7 5 0 0 1 193.2 82.7" stroke="#dfe1e4" fill="none" stroke-width="1.3"/><path d="M193.2 82.7A7 5 0 0 1 193.2 72.7" stroke="#dfe1e4" fill="none" stroke-width="1.3" stroke-dasharray="2.5 2"/><rect x="192.10" y="76.60" width="2.2" height="2.2" fill="#7fb9e6"/><rect x="192.10" y="71.50" width="2.2" height="2.2" fill="#7fb9e6"/><rect x="199.10" y="76.60" width="2.2" height="2.2" fill="#7fb9e6"/><rect x="190" y="98" width="8.6" height="8.6" fill="#5b9fd6"/><path d="M190 103l5-5M190 106.6l8.6-8.6M193.6 106.6l5-5" stroke="#3b4453" stroke-width="1"/><path d="M189 94.5V110M199.6 94.5V110M186.4 97H202M186.4 107.6H202" stroke="#dfe1e4" fill="none" stroke-width="1.3"/><path d="M233.4 53.6H245.4M239.4 47.6V59.6" stroke="#dfe1e4" stroke-width="1.9"/><path d="M239.4 45.4l3.4 4h-6.8zM239.4 61.8l3.4-4h-6.8zM231.2 53.6l4-3.400v6.800zM247.600 53.6l-4-3.400v6.800z" fill="#dfe1e4"/><circle cx="235.2" cy="72.8" r="2.6" stroke="#dfe1e4" fill="none" stroke-width="1.3"/><path d="M240 71.6h4.6v4" stroke="#dfe1e4" fill="none" stroke-width="1.3"/><path d="M244.6 77.6l-2-2.6h4z" fill="#dfe1e4"/><circle cx="238" cy="82.8" r="3" stroke="#6fb5e6" fill="none" stroke-width="1.3"/><circle cx="244.2" cy="82.8" r="3" stroke="#6fb5e6" fill="none" stroke-width="1.3"/><path d="M239 101V94.6H232.5V109.6H239V108" stroke="#dfe1e4" fill="none" stroke-width="1.3"/><path d="M235 105.6H242" stroke="#dfe1e4" fill="none" stroke-width="1.3"/><path d="M244 105.6l-2.6-2v4z" fill="#dfe1e4"/><path d="M241 94.6h1.6l5.2 15h-6" stroke="#6fb5e6" fill="none" stroke-width="1.3"/><path d="M316.6 50.6A6.6 6.6 0 1 1 309.4 49" stroke="#dfe1e4" fill="none" stroke-width="1.3" stroke-width="1.4"/><path d="M312.8 45.2l4.6 3-4.6 3.2z" fill="#dfe1e4"/><path d="M310.4 73.4V84H304.8z" stroke="#dfe1e4" fill="none" stroke-width="1.3" stroke-linejoin="miter"/><path d="M313.4 73.4V84H319z" stroke="#6fb5e6" fill="none" stroke-width="1.3"/><path d="M304.4 99V94.6H319.6V109.6H316" stroke="#6fb5e6" fill="none" stroke-width="1.3"/><rect x="304.4" y="101.6" width="8.6" height="8" stroke="#dfe1e4" fill="none" stroke-width="1.3"/><path d="M373 47.6H389.4" stroke="#dfe1e4" fill="none" stroke-width="1.3" stroke-dasharray="3.4 1.6"/><path d="M376.6 49.4L384.6 58.6M385.8 49.4L380.6 57.6" stroke="#dfe1e4" stroke-width="1.7"/><circle cx="380.2" cy="60" r="1.9" stroke="#dfe1e4" fill="none" stroke-width="1.3"/><circle cx="386.4" cy="58.6" r="1.9" stroke="#dfe1e4" fill="none" stroke-width="1.3"/><path d="M373.4 80.4Q373.6 70.8 382.4 70.6" stroke="#dfe1e4" fill="none" stroke-width="1.3"/><path d="M373.4 82V86M384 70.6H389.4" stroke="#dfe1e4" fill="none" stroke-width="1.3"/><rect x="374.4" y="95.2" width="5" height="5" stroke="#dfe1e4" fill="none" stroke-width="1.3"/><rect x="383" y="95.2" width="5" height="5" stroke="#6fb5e6" fill="none" stroke-width="1.3"/><rect x="374.4" y="104" width="5" height="5" stroke="#6fb5e6" fill="none" stroke-width="1.3"/><rect x="383" y="104" width="5" height="5" stroke="#6fb5e6" fill="none" stroke-width="1.3"/><clipPath id="cpe"><rect x="446" y="44" width="18.400" height="20"/></clipPath><path d="M448.400 61.500H464.400" stroke="#dfe9f4" stroke-width="1.200"/><g clip-path="url(#cpe)"><g transform="translate(451.800 59.200) rotate(-43.400)"><rect x="-1" y="-2.100" width="5.400" height="4.200" rx="1.700" fill="#ea7478"/><rect x="3.600" y="-2.100" width="1.500" height="4.200" fill="#f6ece0"/><rect x="5.100" y="-2.100" width="16" height="4.200" fill="#f8d777"/><rect x="5.100" y="-2.100" width="16" height="1.400" fill="#fbe7a8"/></g></g><rect x="450" y="76.200" width="9.200" height="8.800" stroke="#dfe9f4" fill="none" stroke-width="1.300"/><path d="M448.400 76.200V85M450 75.800l3.200-3.900h10.800l-4.400 3.900M461.200 76.400l2.800-3.300v8.800l-2.800 3.200z" stroke="#6fb5e6" fill="none" stroke-width="1.3" stroke-width="1"/><path d="M464.200 96.200H454a5.800 5.800 0 0 0 0 11.600H464.200" stroke="#6fb5e6" fill="none" stroke-width="1.3" stroke-width="1.500"/><path d="M464.200 99.400H455a2.600 2.600 0 0 0 0 5.200H464.200" stroke="#dfe9f4" fill="none" stroke-width="1.200"/><path d="M535.4 44.8V76.6M566.8 44.8V76.6" stroke="#dfe1e4" stroke-width="1.2"/><path d="M538 51.4H564" stroke="#dfe1e4" stroke-width="1.1"/><path d="M536.4 51.4l3.6-1.8v3.6zM565.8 51.4l-3.6-1.8v3.6z" fill="#dfe1e4"/><path d="M546.6 73.5L540.8 72.5L540.8 75.5L546.6 74.5z" fill="#f4dc6e"/><path d="M548.3 70.4L544.9 65.6L542.8 67.7L547.6 71.1z" fill="#f4dc6e"/><path d="M551.7 69.4L552.7 63.6L549.7 63.6L550.7 69.4z" fill="#f4dc6e"/><path d="M554.8 71.1L559.6 67.7L557.5 65.6L554.1 70.4z" fill="#f4dc6e"/><path d="M555.8 74.5L561.6 75.5L561.6 72.5L555.8 73.5z" fill="#f4dc6e"/><path d="M588.2 47.4V61.2M604 47.4V61.2" stroke="#dfe1e4" stroke-width="1.3"/><path d="M589 51.4H603" stroke="#6fb5e6" stroke-width="1.4"/><circle cx="600.6" cy="75" r="3.2" stroke="#dfe1e4" fill="none" stroke-width="1.3"/><path d="M597.6 76.4C592.6 76.8 591 80 589.6 83" stroke="#dfe1e4" fill="none" stroke-width="1.3"/><path d="M588 85l.6-4.4 3.2 1.8z" fill="#dfe1e4"/><rect x="588.4" y="95.4" width="15.4" height="13.6" stroke="#dfe1e4" fill="none" stroke-width="1.3"/><path d="M588.4 98.6H603.8" stroke="#dfe1e4" stroke-width="1.8"/><path d="M588.4 102H603.8M588.4 105.4H603.8M593.6 98.6V109M598.8 98.6V109" stroke="#dfe1e4" stroke-width="1"/><path d="M688.60 45.2L706.90 45.2L697.30 56.4L679.00 56.4z" fill="#e6e6e6"/><path d="M679.4 58.2h17.6l-2 4.2h-15.4z" fill="#d2d2d2"/><path d="M679.4 64h16l-2 4.8h-14.2z" fill="#d2d2d2"/><rect x="698" y="59" width="13.2" height="18" fill="#f4f4f4"/><rect x="700" y="61" width="9.2" height="6.4" fill="#7dbcf2"/><path d="M701 70.6h7M701 73.4h7" stroke="#c98a3a" stroke-width="1"/><path d="M708.6 70.6l-2-1.4v2.8zM700.4 73.4l2-1.4v2.8z" fill="#c98a3a"/><circle cx="738" cy="52.2" r="5.2" fill="#f7c662"/><path d="M735.6 57.4h4.8v3h-4.8z" fill="#e8f1fa"/><circle cx="756.3" cy="53.6" r="4.1" fill="#f7c25c"/><path d="M761.7 53.6L763.9 53.6" stroke="#f7c25c" stroke-width="1.2"/><path d="M760.1 57.4L761.7 59.0" stroke="#f7c25c" stroke-width="1.2"/><path d="M756.3 59.0L756.3 61.2" stroke="#f7c25c" stroke-width="1.2"/><path d="M752.5 57.4L750.9 59.0" stroke="#f7c25c" stroke-width="1.2"/><path d="M750.9 53.6L748.7 53.6" stroke="#f7c25c" stroke-width="1.2"/><path d="M752.5 49.8L750.9 48.2" stroke="#f7c25c" stroke-width="1.2"/><path d="M756.3 48.2L756.3 46.0" stroke="#f7c25c" stroke-width="1.2"/><path d="M760.1 49.8L761.7 48.2" stroke="#f7c25c" stroke-width="1.2"/><rect x="769" y="53" width="10.8" height="8" fill="#f5c452"/><path d="M776 53v-2.6a3.6 3.6 0 0 1 7.2 0v1.6" stroke="#f5c452" stroke-width="1.7" fill="none"/><rect x="773.6" y="55.4" width="1.4" height="3.2" fill="#3b4453"/><rect x="789.4" y="48.2" width="13" height="13.2" fill="#fff" stroke="#111" stroke-width="1"/><path d="M735.40 71.4L744.80 71.4L739.60 76.4L730.20 76.4z" fill="#e2e2e2"/><circle cx="742.4" cy="79" r="3.6" fill="#62cfd8"/><path d="M740.8 82.8h3.2v2.4h-3.2z" fill="#eef"/><path d="M759.20 70.2L768.60 70.2L763.40 74.60000000000001L754.00 74.60000000000001z" fill="#e2e2e2"/><path d="M754 75.9h9.600l1.600-1.800v1.300l-1.600 1.900h-9.600z" fill="#d6d6d6"/><path d="M754 78.9h9.600l1.600-1.800v1.300l-1.600 1.900h-9.600z" fill="#6fb5e6"/><path d="M770.6 79.6L765 85" stroke="#dfe1e4" stroke-width="1.5"/><path d="M763.4 86.6l1-4.4 3.4 3.4z" fill="#dfe1e4"/><path d="M783.60 71.4L793.00 71.4L787.80 76.4L778.40 76.4z" fill="#e2e2e2"/><path d="M785.4 81.6L793.8 81.6" stroke="#5fd0d8" stroke-width="1.4"/><path d="M787.5 78.0L791.7 85.2" stroke="#5fd0d8" stroke-width="1.4"/><path d="M791.7 78.0L787.5 85.2" stroke="#5fd0d8" stroke-width="1.4"/><circle cx="789.6" cy="81.6" r="2" fill="none" stroke="#5fd0d8" stroke-width="1"/><path d="M807.60 71.4L817.00 71.4L811.80 76.4L802.40 76.4z" fill="#e2e2e2"/><rect x="811" y="80.4" width="7.2" height="5.8" fill="#5fd0d8"/><path d="M812.6 80.4v-1.4a2 2 0 0 1 4 0v1.4" stroke="#5fd0d8" stroke-width="1.3" fill="none"/><circle cx="834.3" cy="72.6" r="2.9" fill="#d8d8d8"/><path d="M826.6 79l5-3.4h10.8l-4.6 3.4z" fill="#7dbcf2"/><path d="M826.6 82h11.2l4.6-3.4v1.6l-4.6 3.4h-11.2zM826.6 85.4h11.2l4.6-3.4v1.6l-4.6 3.4h-11.2z" fill="#dedede"/><path d="M735.40 94.4L744.80 94.4L739.60 98.80000000000001L730.20 98.80000000000001z" fill="#e2e2e2"/><path d="M730.2 100.10000000000001h9.600l1.600-1.800v1.300l-1.600 1.900h-9.600z" fill="#d6d6d6"/><path d="M730.2 103.10000000000001h9.600l1.600-1.800v1.300l-1.600 1.900h-9.600z" fill="#dcdcdc"/><circle cx="742.4" cy="103" r="3.6" fill="#f7c662"/><path d="M740.8 106.8h3.2v2.4h-3.2z" fill="#eef"/><path d="M759.20 94.4L768.60 94.4L763.40 98.80000000000001L754.00 98.80000000000001z" fill="#e2e2e2"/><path d="M754 100.10000000000001h9.600l1.600-1.800v1.300l-1.600 1.900h-9.600z" fill="#d6d6d6"/><path d="M754 103.10000000000001h9.600l1.600-1.800v1.300l-1.600 1.900h-9.600z" fill="#6fb5e6"/><path d="M764.6 109L770 103.6" stroke="#dfe1e4" stroke-width="1.5"/><path d="M771.6 102l-1 4.4-3.4-3.4z" fill="#dfe1e4"/><path d="M783.60 94.4L793.00 94.4L787.80 98.80000000000001L778.40 98.80000000000001z" fill="#e2e2e2"/><path d="M778.4 100.10000000000001h9.600l1.600-1.800v1.300l-1.600 1.900h-9.600z" fill="#d6d6d6"/><path d="M778.4 103.10000000000001h9.600l1.600-1.800v1.300l-1.600 1.900h-9.600z" fill="#dcdcdc"/><circle cx="789.6" cy="105.4" r="2.8" fill="#f7c25c"/><path d="M793.4 105.4L794.8 105.4" stroke="#f7c25c" stroke-width="1"/><path d="M792.3 108.1L793.3 109.1" stroke="#f7c25c" stroke-width="1"/><path d="M789.6 109.2L789.6 110.6" stroke="#f7c25c" stroke-width="1"/><path d="M786.9 108.1L785.9 109.1" stroke="#f7c25c" stroke-width="1"/><path d="M785.8 105.4L784.4 105.4" stroke="#f7c25c" stroke-width="1"/><path d="M786.9 102.7L785.9 101.7" stroke="#f7c25c" stroke-width="1"/><path d="M789.6 101.6L789.6 100.2" stroke="#f7c25c" stroke-width="1"/><path d="M792.3 102.7L793.3 101.7" stroke="#f7c25c" stroke-width="1"/><path d="M807.60 95.4L817.00 95.4L811.80 100.4L802.40 100.4z" fill="#e2e2e2"/><rect x="809" y="105" width="7.2" height="5.2" fill="#f5c452"/><path d="M813.6 105v-1.6a2 2 0 0 1 4 0v.8" stroke="#f5c452" stroke-width="1.3" fill="none"/><path d="M831.60 94.4L841.00 94.4L835.80 98.80000000000001L826.40 98.80000000000001z" fill="#e2e2e2"/><path d="M826.4 100.10000000000001h9.600l1.600-1.800v1.300l-1.600 1.900h-9.600z" fill="#d6d6d6"/><path d="M826.4 103.10000000000001h9.600l1.600-1.800v1.300l-1.600 1.900h-9.600z" fill="#dcdcdc"/><path d="M834 103.6l3.6-3 5 5.6-3.6 3z" fill="#f5d070"/><path d="M838.6 99.6l2.6-2.2 1.2 1.4-1 .8 1.2 1.4-1.4 1.2z" fill="#fff"/><path d="M957.8 43.4h11.6l4.8 4.8v18.2h-16.4z" fill="#8fc7f6"/><path d="M969.4 43.4l4.8 4.8h-4.8z" fill="#e9f4fd"/><rect x="943.4" y="53.6" width="20" height="13.8" fill="#6a707c" stroke="#d6d8dc" stroke-width="1.2"/><circle cx="963.4" cy="67.4" r="7.2" fill="#7a808b" fill-opacity=".9" stroke="#d6d8dc" stroke-width="1.2"/><rect x="942" y="66" width="2.8" height="2.8" fill="#e0e0e0"/><rect x="983" y="51.6" width="9" height="7" fill="#6a707c" stroke="#d6d8dc" stroke-width="1.1"/><circle cx="992.4" cy="59.2" r="3.2" fill="#6a707c" stroke="#d6d8dc" stroke-width="1.1"/><rect x="981.8" y="57.6" width="2" height="2" fill="#e0e0e0"/><path d="M993.6 44.4L994.4 47.4L997.1 45.9L995.6 48.6L998.6 49.4L995.6 50.2L997.1 52.9L994.4 51.4L993.6 54.4L992.8 51.4L990.1 52.9L991.6 50.2L988.6 49.4L991.6 48.6L990.1 45.9L992.8 47.4z" fill="#f7c862"/><rect x="983" y="75.6" width="9" height="7" fill="#6a707c" stroke="#d6d8dc" stroke-width="1.1"/><circle cx="992.4" cy="83.19999999999999" r="3.2" fill="#6a707c" stroke="#d6d8dc" stroke-width="1.1"/><rect x="981.8" y="81.6" width="2" height="2" fill="#e0e0e0"/><g transform="translate(988.2 81.6) scale(0.95)"><path d="M0 0l1-3.2 6.4-6.6 2.4 2.4-6.6 6.4z" fill="#f5d48a"/><path d="M7.4-9.8l1.6-1.6 2.4 2.4-1.6 1.6z" fill="#ea7878"/><path d="M0 0l1-3.2 2.2 2.2z" fill="#fff"/></g><path d="M982.2 95.6h6l1.6 1.6 5-1 1.6 6.4-6.8 6.4-7.4-7z" fill="#e9e9e9"/><circle cx="985.4" cy="98.6" r="1.1" fill="#3b4453"/><g transform="translate(988.4 105.6) scale(0.95)"><path d="M0 0l1-3.2 6.4-6.6 2.4 2.4-6.6 6.4z" fill="#f5d48a"/><path d="M7.4-9.8l1.6-1.6 2.4 2.4-1.6 1.6z" fill="#ea7878"/><path d="M0 0l1-3.2 2.2 2.2z" fill="#fff"/></g><rect x="1115" y="45" width="20" height="28" fill="#e4e0dc"/><rect x="1117.600" y="47.300" width="13" height="9.800" fill="#80c2f6" stroke="#2c3440" stroke-width=".8"/><path d="M1118.400 63.200H1129.600M1118.400 68.300H1124" stroke="#8a8a8a" stroke-width="1"/><path d="M1122 61.400v4M1126 66.200v4.200" stroke="#5e5e5e" stroke-width="1.700"/><path d="M1128.400 68.600l5.900-2.700 7.700 8.100-4 3.400z" fill="#f8d27e" stroke="#2c3440" stroke-width=".6"/><path d="M1134.300 65.900l3.300-2.400 7.700 7.700-3.300 2.800z" fill="#f4f4f4" stroke="#2c3440" stroke-width=".6"/><path d="M1140.300 64.600l3.100-2 1.700 1.900-2.800 2.400z" fill="#f4f4f4"/><path d="M1162 69h16.200v1.200h-16.200zM1162 71.900h16.200v2.200h-16.200zM1162 75.900h16.200v3.200h-16.200zM1162 80.900h16.200v4h-16.200z" fill="#e4e4e4"/><path d="M1162 94.300H1177.600" stroke="#e2e2e2" stroke-width="1.200" stroke-dasharray="1.200 1.200"/><path d="M1162 97.500H1177.600" stroke="#e2e2e2" stroke-width="1.200" stroke-dasharray="2.600 1.200"/><path d="M1162 100.500H1177.600" stroke="#e2e2e2" stroke-width="1.200" stroke-dasharray="9 1.200 2 1.200"/><path d="M1162 103.600H1177.600" stroke="#e2e2e2" stroke-width="1.200" stroke-dasharray="3.400 1.400"/><path d="M1162 106.600H1177.600" stroke="#e2e2e2" stroke-width="1.200" stroke-dasharray="4.600 1.300"/><path d="M1372 50.2H1368.6V76.2H1372M1386.4 76.2H1389.8V60.4" stroke="#dfe1e4" fill="none" stroke-width="1.3" stroke-width="1.4"/><rect x="1374.4" y="54.4" width="9.6" height="6" fill="#4d82b0" stroke="#7fb9e6" stroke-width="1"/><circle cx="1379" cy="68.9" r="4.6" fill="#8c9098" stroke="#c8cace" stroke-width="1"/><path d="M1391.8 45.8L1393.1 50.5L1397.3 48.1L1394.9 52.3L1399.6 53.6L1394.9 54.9L1397.3 59.1L1393.1 56.7L1391.8 61.4L1390.5 56.7L1386.3 59.1L1388.7 54.9L1384.0 53.6L1388.7 52.3L1386.3 48.1L1390.5 50.5z" fill="#f8c866"/><path d="M1413.5 47H1410.5V60H1413.5M1418.5 47H1421.5V60H1418.5" stroke="#dfe1e4" fill="none" stroke-width="1.3" stroke-width="1.2"/><rect x="1413.5" y="49" width="4.6" height="3.6" fill="#5a8fc0" stroke="#9cc8ee" stroke-width=".6"/><circle cx="1415.8" cy="56.4" r="2.3" fill="#8c9098" stroke="#c8cace" stroke-width=".6"/><path d="M1418.4 51.6l5.4 5.4M1423.8 51.6l-5.4 5.4" stroke="#f0465a" stroke-width="2"/><path d="M1412.5 71H1409.5V84H1412.5M1417.5 71H1420.5V84H1417.5" stroke="#dfe1e4" fill="none" stroke-width="1.3" stroke-width="1.2"/><rect x="1412.5" y="73" width="4.6" height="3.6" fill="#5a8fc0" stroke="#9cc8ee" stroke-width=".6"/><circle cx="1414.8" cy="80.4" r="2.3" fill="#8c9098" stroke="#c8cace" stroke-width=".6"/><g transform="translate(1416.6 85.6) scale(0.8)"><path d="M0 0l1-3.2 6.4-6.6 2.4 2.4-6.6 6.4z" fill="#f5d48a"/><path d="M7.4-9.8l1.6-1.6 2.4 2.4-1.6 1.6z" fill="#ea7878"/><path d="M0 0l1-3.2 2.2 2.2z" fill="#fff"/></g><path d="M1412.5 95H1409.5V108H1412.5M1417.5 95H1420.5V108H1417.5" stroke="#dfe1e4" fill="none" stroke-width="1.3" stroke-width="1.2"/><rect x="1412.5" y="97" width="4.6" height="3.6" fill="#4ec07a" stroke="#9cc8ee" stroke-width=".6"/><circle cx="1414.8" cy="104.4" r="2.3" fill="#4ec07a" stroke="#c8cace" stroke-width=".6"/><path transform="translate(1418.4 98.6) scale(0.95)" d="M0 0v11l2.6-2.4 2 4.4 2-1-2-4.2h3.6z" fill="#fff" stroke="#333" stroke-width=".5"/><rect x="1454" y="57" width="28.6" height="6.8" fill="#f5c858"/><path d="M1456.4 57v3" stroke="#b88a2a" stroke-width=".8"/><path d="M1459.0 57v2" stroke="#b88a2a" stroke-width=".8"/><path d="M1461.6 57v3" stroke="#b88a2a" stroke-width=".8"/><path d="M1464.2 57v2" stroke="#b88a2a" stroke-width=".8"/><path d="M1466.8 57v3" stroke="#b88a2a" stroke-width=".8"/><path d="M1469.4 57v2" stroke="#b88a2a" stroke-width=".8"/><path d="M1472.0 57v3" stroke="#b88a2a" stroke-width=".8"/><path d="M1474.6 57v2" stroke="#b88a2a" stroke-width=".8"/><path d="M1477.2 57v3" stroke="#b88a2a" stroke-width=".8"/><path d="M1479.8 57v2" stroke="#b88a2a" stroke-width=".8"/><path transform="translate(1506 49) scale(0.9)" d="M0 0v11l2.6-2.4 2 4.4 2-1-2-4.2h3.6z" fill="#fff" stroke="#333" stroke-width=".5"/><path d="M1513.6 45l-3.4 5h2.6l-1.4 4 4.6-5.6h-2.8l2-3.4z" fill="#f7c862"/><rect x="1513.6" y="54" width="8.4" height="7.4" fill="#eef4fb"/><path d="M1515 56h1.2M1517 56h4M1515 58h1.2M1517 58h4M1515 60h1.2M1517 60h4" stroke="#3f7fc0" stroke-width="1"/><rect x="1506.6" y="71" width="13.6" height="13.6" fill="#2d6a48" stroke="#5fd08a" stroke-width="1" stroke-dasharray="2 1.2"/><path d="M1509 73.6h6v2.6h2.6v6h-6v-2.6h-2.6z" fill="#6fd898"/><path transform="translate(1514.6 75.6) scale(0.9)" d="M0 0v11l2.6-2.4 2 4.4 2-1-2-4.2h3.6z" fill="#fff" stroke="#333" stroke-width=".5"/><rect x="1507.8" y="94.2" width="12.6" height="15.6" fill="#dedede"/><rect x="1509.4" y="95.8" width="9.4" height="3.2" fill="#555b66"/><rect x="1509.6" y="100.6" width="2.2" height="1.8" fill="#555b66"/><rect x="1509.6" y="103.5" width="2.2" height="1.8" fill="#555b66"/><rect x="1509.6" y="106.4" width="2.2" height="1.8" fill="#555b66"/><rect x="1513.0" y="100.6" width="2.2" height="1.8" fill="#555b66"/><rect x="1513.0" y="103.5" width="2.2" height="1.8" fill="#555b66"/><rect x="1513.0" y="106.4" width="2.2" height="1.8" fill="#555b66"/><rect x="1516.4" y="100.6" width="2.2" height="1.8" fill="#555b66"/><rect x="1516.4" y="103.5" width="2.2" height="1.8" fill="#555b66"/><rect x="1516.4" y="106.4" width="2.2" height="1.8" fill="#555b66"/><rect x="1542.8" y="48.2" width="22.2" height="24.4" fill="#e9aa62"/><path d="M1549 49.4v-2.6h3v-2h3.4v2h3v2.6z" fill="#f2f2f2"/><path d="M1550.8 55h12.6l5.6 5.4v16.2h-18.2z" fill="#dcdcdc"/><path d="M1563.4 55l5.6 5.4h-5.6z" fill="#f8f8f8"/><path d="M1586.6 47h10v12h-10z" fill="none" stroke="#cfcfcf" stroke-width="1.3"/><path d="M1588.6 50h6M1588.6 53h6M1588.6 56h4" stroke="#cfcfcf" stroke-width="1"/><path d="M1594 52.4l6 6.4M1600.6 52.4l-6 6.4" stroke="#fff" stroke-width="1.5"/><circle cx="1594" cy="60" r="1.7" stroke="#dfe1e4" fill="none" stroke-width="1.3" stroke-width="1.1"/><circle cx="1600.4" cy="60" r="1.7" stroke="#dfe1e4" fill="none" stroke-width="1.3" stroke-width="1.1"/><path d="M1587.4 70.4h5.4l2.6 2.6v8h-8z" fill="#cfcfcf"/><path d="M1590.4 74h6l3.6 3.6v8.4h-9.6z" fill="#dcdcdc" stroke="#3b4453" stroke-width=".7"/></svg>
<div class="t" style="left:10.42px;top:82.14px;font-size:12px;line-height:12px;color:#e6e6e6;letter-spacing:0.144px;">Line</div>
<div class="t" style="left:43.62px;top:82.14px;font-size:12px;line-height:12px;color:#e6e6e6;letter-spacing:0.157px;">Polyline</div>
<div class="t" style="left:100.09px;top:82.14px;font-size:12px;line-height:12px;color:#e6e6e6;letter-spacing:0.035px;">Circle</div>
<div class="t" style="left:152.28px;top:82.14px;font-size:12px;line-height:12px;color:#e6e6e6;letter-spacing:0.019px;">Arc</div>
<svg style="left:208.0px;top:51.8px;" width="7" height="5" viewBox="0 0 7 5"><path d="M1 1h5l-2.5 3z" fill="#d8d8d8"/></svg>
<svg style="left:208.0px;top:75.5px;" width="7" height="5" viewBox="0 0 7 5"><path d="M1 1h5l-2.5 3z" fill="#d8d8d8"/></svg>
<svg style="left:208.0px;top:99.5px;" width="7" height="5" viewBox="0 0 7 5"><path d="M1 1h5l-2.5 3z" fill="#d8d8d8"/></svg>
<svg style="left:111.0px;top:97.1px;" width="7" height="5" viewBox="0 0 7 5"><path d="M1 1h5l-2.5 3z" fill="#d8d8d8"/></svg>
<svg style="left:156.9px;top:97.1px;" width="7" height="5" viewBox="0 0 7 5"><path d="M1 1h5l-2.5 3z" fill="#d8d8d8"/></svg>
<div class="t" style="left:91.62px;top:120.14px;font-size:12px;line-height:12px;color:#e6e6e6;letter-spacing:-0.249px;">Draw</div>
<svg style="left:124.0px;top:122.5px;" width="10" height="6.4" viewBox="0 0 10 6.4"><path d="M1 1h8l-4.0 4.4z" fill="#d8d8d8"/></svg>
<div class="t" style="left:252.62px;top:47.54px;font-size:12px;line-height:12px;color:#e6e6e6;letter-spacing:0.591px;">Move</div>
<div class="t" style="left:252.99px;top:71.54px;font-size:12px;line-height:12px;color:#e6e6e6;letter-spacing:-0.027px;">Copy</div>
<div class="t" style="left:253.06px;top:95.54px;font-size:12px;line-height:12px;color:#e6e6e6;letter-spacing:-0.099px;">Stretch</div>
<div class="t" style="left:324.52px;top:47.54px;font-size:12px;line-height:12px;color:#e6e6e6;letter-spacing:-0.067px;">Rotate</div>
<div class="t" style="left:324.52px;top:71.54px;font-size:12px;line-height:12px;color:#e6e6e6;letter-spacing:0.471px;">Mirror</div>
<div class="t" style="left:324.96px;top:95.54px;font-size:12px;line-height:12px;color:#e6e6e6;letter-spacing:-0.610px;">Scale</div>
<div class="t" style="left:394.33px;top:47.54px;font-size:12px;line-height:12px;color:#e6e6e6;letter-spacing:-0.294px;">Trim</div>
<div class="t" style="left:393.62px;top:71.54px;font-size:12px;line-height:12px;color:#e6e6e6;letter-spacing:0.028px;">Fillet</div>
<div class="t" style="left:394.58px;top:95.54px;font-size:12px;line-height:12px;color:#e6e6e6;letter-spacing:-0.406px;">Array</div>
<svg style="left:426.9px;top:51.3px;" width="7" height="5" viewBox="0 0 7 5"><path d="M1 1h5l-2.5 3z" fill="#d8d8d8"/></svg>
<svg style="left:428.9px;top:75.5px;" width="7" height="5" viewBox="0 0 7 5"><path d="M1 1h5l-2.5 3z" fill="#d8d8d8"/></svg>
<svg style="left:428.9px;top:99.5px;" width="7" height="5" viewBox="0 0 7 5"><path d="M1 1h5l-2.5 3z" fill="#d8d8d8"/></svg>
<div class="t" style="left:323.52px;top:120.14px;font-size:12px;line-height:12px;color:#e6e6e6;letter-spacing:0.633px;">Modify</div>
<svg style="left:367.4px;top:122.3px;" width="10" height="6.4" viewBox="0 0 10 6.4"><path d="M1 1h8l-4.0 4.4z" fill="#d8d8d8"/></svg>
<div class="t" style="left:486.33px;top:42.83px;font-size:38px;line-height:38px;color:#dcdcdc;">A</div>
<div class="t" style="left:489.33px;top:82.14px;font-size:12px;line-height:12px;color:#e6e6e6;letter-spacing:-0.683px;">Text</div>
<svg style="left:494.9px;top:96.9px;" width="7" height="5" viewBox="0 0 7 5"><path d="M1 1h5l-2.5 3z" fill="#d8d8d8"/></svg>
<div class="t" style="left:522.52px;top:82.14px;font-size:12px;line-height:12px;color:#e6e6e6;letter-spacing:0.147px;">Dimension</div>
<div class="t" style="left:608.62px;top:47.54px;font-size:12px;line-height:12px;color:#e6e6e6;letter-spacing:-0.195px;">Linear</div>
<div class="t" style="left:608.62px;top:71.54px;font-size:12px;line-height:12px;color:#e6e6e6;letter-spacing:-0.376px;">Leader</div>
<div class="t" style="left:609.53px;top:95.54px;font-size:12px;line-height:12px;color:#e6e6e6;letter-spacing:-0.371px;">Table</div>
<svg style="left:647.9px;top:51.3px;" width="7" height="5" viewBox="0 0 7 5"><path d="M1 1h5l-2.5 3z" fill="#d8d8d8"/></svg>
<svg style="left:651.3px;top:75.5px;" width="7" height="5" viewBox="0 0 7 5"><path d="M1 1h5l-2.5 3z" fill="#d8d8d8"/></svg>
<div class="t" style="left:532.48px;top:120.14px;font-size:12px;line-height:12px;color:#e6e6e6;letter-spacing:0.269px;">Annotation</div>
<svg style="left:597.0px;top:122.3px;" width="10" height="6.4" viewBox="0 0 10 6.4"><path d="M1 1h8l-4.0 4.4z" fill="#d8d8d8"/></svg>
<div class="t" style="left:681.42px;top:82.14px;font-size:12px;line-height:12px;color:#e6e6e6;letter-spacing:-0.258px;">Layer</div>
<div class="t" style="left:668.62px;top:97.04px;font-size:12px;line-height:12px;color:#e6e6e6;letter-spacing:-0.097px;">Properties</div>
<div class="t" style="left:807.62px;top:47.54px;font-size:12px;line-height:12px;color:#e6e6e6;letter-spacing:0.084px;">Main Structure</div>
<svg style="left:922.7px;top:50.55px;" width="10" height="6.5" viewBox="0 0 10 6.5"><path d="M1 1h8l-4.0 4.5z" fill="#d8d8d8"/></svg>
<div class="t" style="left:846.52px;top:71.54px;font-size:12px;line-height:12px;color:#e6e6e6;letter-spacing:-0.011px;">Make Current</div>
<div class="t" style="left:846.52px;top:95.54px;font-size:12px;line-height:12px;color:#e6e6e6;letter-spacing:-0.045px;">Match Layer</div>
<div class="t" style="left:776.52px;top:120.14px;font-size:12px;line-height:12px;color:#e6e6e6;letter-spacing:-0.420px;">Layers</div>
<svg style="left:815.2px;top:122.3px;" width="10" height="6.4" viewBox="0 0 10 6.4"><path d="M1 1h8l-4.0 4.4z" fill="#d8d8d8"/></svg>
<div class="t" style="left:943.49px;top:81.24px;font-size:12px;line-height:12px;color:#e6e6e6;letter-spacing:-0.083px;">Insert</div>
<svg style="left:954.9px;top:96.2px;" width="7" height="5" viewBox="0 0 7 5"><path d="M1 1h5l-2.5 3z" fill="#d8d8d8"/></svg>
<div class="t" style="left:1002.89px;top:47.54px;font-size:12px;line-height:12px;color:#e6e6e6;letter-spacing:-0.275px;">Create</div>
<div class="t" style="left:1002.52px;top:71.54px;font-size:12px;line-height:12px;color:#e6e6e6;letter-spacing:-0.035px;">Edit</div>
<div class="t" style="left:1002.52px;top:95.54px;font-size:12px;line-height:12px;color:#e6e6e6;letter-spacing:0.120px;">Edit Attributes</div>
<svg style="left:1084.9px;top:99.5px;" width="7" height="5" viewBox="0 0 7 5"><path d="M1 1h5l-2.5 3z" fill="#d8d8d8"/></svg>
<div class="t" style="left:995.32px;top:120.14px;font-size:12px;line-height:12px;color:#e6e6e6;letter-spacing:0.081px;">Block</div>
<svg style="left:1030.4px;top:122.3px;" width="10" height="6.4" viewBox="0 0 10 6.4"><path d="M1 1h8l-4.0 4.4z" fill="#d8d8d8"/></svg>
<div class="t" style="left:1112.42px;top:82.14px;font-size:12px;line-height:12px;color:#e6e6e6;letter-spacing:0.546px;">Match</div>
<div class="t" style="left:1102.52px;top:97.04px;font-size:12px;line-height:12px;color:#e6e6e6;letter-spacing:-0.119px;">Properties</div>
<div class="t" style="left:1218.42px;top:47.54px;font-size:12px;line-height:12px;color:#e6e6e6;letter-spacing:-0.390px;">ByLayer</div>
<div class="t" style="left:1249.42px;top:70.64px;font-size:12px;line-height:12px;color:#e6e6e6;letter-spacing:-0.373px;">ByLayer</div>
<div class="t" style="left:1249.42px;top:94.54px;font-size:12px;line-height:12px;color:#e6e6e6;letter-spacing:-0.373px;">ByLayer</div>
<svg style="left:1348.9px;top:50.55px;" width="10" height="6.5" viewBox="0 0 10 6.5"><path d="M1 1h8l-4.0 4.5z" fill="#d8d8d8"/></svg>
<svg style="left:1348.9px;top:73.95px;" width="10" height="6.5" viewBox="0 0 10 6.5"><path d="M1 1h8l-4.0 4.5z" fill="#d8d8d8"/></svg>
<svg style="left:1348.9px;top:97.75px;" width="10" height="6.5" viewBox="0 0 10 6.5"><path d="M1 1h8l-4.0 4.5z" fill="#d8d8d8"/></svg>
<div class="t" style="left:1190.52px;top:120.14px;font-size:12px;line-height:12px;color:#e6e6e6;letter-spacing:-0.130px;">Properties</div>
<svg style="left:1249.4px;top:122.3px;" width="10" height="6.4" viewBox="0 0 10 6.4"><path d="M1 1h8l-4.0 4.4z" fill="#d8d8d8"/></svg>
<svg style="left:1350px;top:122px;" width="9" height="9" viewBox="0 0 9 9"><path d="M1.5 1.5L6.4 6.4" stroke="#d0d0d0" stroke-width="1.2"/><path d="M7.4 3v4.4H3z" fill="#d0d0d0"/></svg>
<div class="t" style="left:1367.80px;top:82.14px;font-size:12px;line-height:12px;color:#e6e6e6;letter-spacing:-0.011px;">Group</div>
<div class="t" style="left:1370.90px;top:120.14px;font-size:12px;line-height:12px;color:#e6e6e6;letter-spacing:-0.223px;">Groups</div>
<svg style="left:1414.6px;top:122.3px;" width="10" height="6.4" viewBox="0 0 10 6.4"><path d="M1 1h8l-4.0 4.4z" fill="#d8d8d8"/></svg>
<div class="t" style="left:1444.52px;top:82.14px;font-size:12px;line-height:12px;color:#e6e6e6;letter-spacing:-0.078px;">Measure</div>
<svg style="left:1464.1px;top:96.7px;" width="7" height="5" viewBox="0 0 7 5"><path d="M1 1h5l-2.5 3z" fill="#d8d8d8"/></svg>
<div class="t" style="left:1452.67px;top:120.14px;font-size:12px;line-height:12px;color:#e6e6e6;letter-spacing:0.136px;">Utilities</div>
<svg style="left:1497.0px;top:122.3px;" width="10" height="6.4" viewBox="0 0 10 6.4"><path d="M1 1h8l-4.0 4.4z" fill="#d8d8d8"/></svg>
<div class="t" style="left:1541.42px;top:82.14px;font-size:12px;line-height:12px;color:#e6e6e6;letter-spacing:-0.392px;">Paste</div>
<svg style="left:1553.0px;top:96.7px;" width="7" height="5" viewBox="0 0 7 5"><path d="M1 1h5l-2.5 3z" fill="#d8d8d8"/></svg>
<div class="t" style="left:1542.99px;top:120.14px;font-size:12px;line-height:12px;color:#e6e6e6;letter-spacing:0.153px;">Clipboard</div>
<div style="left:0px;top:135px;width:1921px;height:27.5px;background:#222933;"></div>
<div style="left:0px;top:162px;width:1921px;height:32px;background:#3b4453;"></div>
<svg style="left:0px;top:135px;" width="480" height="30" viewBox="0 135 480 30"><path d="M11 161C17.0 161 15.5 139.6 26.0 139.6H134.0C144.5 139.6 143.0 161 149 161z" fill="#303743"/><path d="M141 161C147.0 161 145.5 139.6 156.0 139.6H256.0C266.5 139.6 265.0 161 271 161z" fill="#303743"/><path d="M263 162.5C269.0 162.5 267.5 139.6 278.0 139.6H422.0C432.5 139.6 431.0 162.5 437 162.5z" fill="#3b4453"/><path d="M441 146.4c2-1.6 8-1.6 11-1.2 3 .4 5.4 5.4 6 9.4.4 2.6-4 3.6-8 3.6h-7c-3.4 0-5.4-8.6-2-11.800z" fill="#2f3642"/><path d="M0 139.6h6c6 0 6 14 3 21.400H0z" fill="#262d38"/><path d="M246.4 147.2l7.2 7.2M253.6 147.2l-7.2 7.2" stroke="#c9ccd2" stroke-width="1.7"/><path d="M408.4 147.2l7.2 7.2M415.6 147.2l-7.2 7.2" stroke="#c9ccd2" stroke-width="1.7"/><path d="M443.400 152h7.2M447 148.400v7.2" stroke="#c9ccd2" stroke-width="1.7"/></svg>
<div class="t" style="left:31.26px;top:145.64px;font-size:12px;line-height:12px;color:#d2d5da;letter-spacing:-0.478px;">Start</div>
<div class="t" style="left:153.89px;top:145.64px;font-size:12px;line-height:12px;color:#d2d5da;letter-spacing:-0.047px;">ChubCub48*</div>
<div class="t" style="left:276.89px;top:145.64px;font-size:12px;line-height:12px;color:#f2f2f2;letter-spacing:-0.130px;">ChubCub 48 Cut Parts*</div>
<div style="left:0px;top:166.4px;width:428.6px;height:23.4px;background:#39414f;border:1px solid #2a313c;border-left:none;box-sizing:border-box;"></div>
<svg style="left:0px;top:164px;" width="432" height="28" viewBox="0 164 432 28"><rect x="2.2" y="170.00" width="1" height="1" fill="#d4d7dc"/><rect x="4.1" y="170.00" width="1" height="1" fill="#d4d7dc"/><rect x="2.2" y="171.65" width="1" height="1" fill="#d4d7dc"/><rect x="4.1" y="171.65" width="1" height="1" fill="#d4d7dc"/><rect x="2.2" y="173.30" width="1" height="1" fill="#d4d7dc"/><rect x="4.1" y="173.30" width="1" height="1" fill="#d4d7dc"/><rect x="2.2" y="174.95" width="1" height="1" fill="#d4d7dc"/><rect x="4.1" y="174.95" width="1" height="1" fill="#d4d7dc"/><rect x="2.2" y="176.60" width="1" height="1" fill="#d4d7dc"/><rect x="4.1" y="176.60" width="1" height="1" fill="#d4d7dc"/><rect x="2.2" y="178.25" width="1" height="1" fill="#d4d7dc"/><rect x="4.1" y="178.25" width="1" height="1" fill="#d4d7dc"/><rect x="2.2" y="179.90" width="1" height="1" fill="#d4d7dc"/><rect x="4.1" y="179.90" width="1" height="1" fill="#d4d7dc"/><rect x="2.2" y="181.55" width="1" height="1" fill="#d4d7dc"/><rect x="4.1" y="181.55" width="1" height="1" fill="#d4d7dc"/><rect x="2.2" y="183.20" width="1" height="1" fill="#d4d7dc"/><rect x="4.1" y="183.20" width="1" height="1" fill="#d4d7dc"/><path d="M14.400 178.600H22.400" stroke="#e2e4e8" fill="none" stroke-width="1.25"/><rect x="11.200" y="177.200" width="2.800" height="2.800" stroke="#e2e4e8" fill="none" stroke-width="1.25" stroke-width="1"/><rect x="22.60" y="176.40" width="4.4" height="4.4" fill="#3a3436" stroke="#f2b88e" stroke-width="1.25"/><path d="M35.500 172.900H44" stroke="#e2e4e8" fill="none" stroke-width="1.25"/><path d="M35.500 174V182" stroke="#e2e4e8" fill="none" stroke-width="1.25" stroke-dasharray="2 1.400"/><rect x="34.200" y="183" width="2.600" height="2.600" stroke="#e2e4e8" fill="none" stroke-width="1.25" stroke-width="1"/><rect x="44.20" y="170.40" width="4.4" height="4.4" fill="#3a3436" stroke="#f2b88e" stroke-width="1.25"/><path d="M57.2 169.400V187" stroke="#5c6474" stroke-width="1.1"/><path d="M58.2 169.400V187" stroke="#2e3541" stroke-width="1"/><path d="M178 169.400V187" stroke="#5c6474" stroke-width="1.1"/><path d="M179 169.400V187" stroke="#2e3541" stroke-width="1"/><path d="M253 169.400V187" stroke="#5c6474" stroke-width="1.1"/><path d="M254 169.400V187" stroke="#2e3541" stroke-width="1"/><path d="M351 169.400V187" stroke="#5c6474" stroke-width="1.1"/><path d="M352 169.400V187" stroke="#2e3541" stroke-width="1"/><path d="M402.9 169.400V187" stroke="#5c6474" stroke-width="1.1"/><path d="M403.9 169.400V187" stroke="#2e3541" stroke-width="1"/><path d="M67 181.800L75 174.200" stroke="#e2e4e8" fill="none" stroke-width="1.25"/><rect x="63.10" y="181.30" width="4.4" height="4.4" fill="#3a3436" stroke="#f2b88e" stroke-width="1.25"/><rect x="74.30" y="170.40" width="4.4" height="4.4" fill="#3a3436" stroke="#f2b88e" stroke-width="1.25"/><path d="M86.200 185.800L101 171" stroke="#e2e4e8" fill="none" stroke-width="1.25"/><rect x="91.40" y="176.30" width="4.4" height="4.4" fill="#3a3436" stroke="#f2b88e" stroke-width="1.25"/><path d="M109.400 170.600L124 185M124 170.600L109.400 185" stroke="#e2e4e8" fill="none" stroke-width="1.25"/><rect x="114.40" y="175.40" width="4.4" height="4.4" fill="#3a3436" stroke="#f2b88e" stroke-width="1.25"/><path d="M132.400 170.600L147 185M147 170.600L132.400 185" stroke="#e2e4e8" fill="none" stroke-width="1.25" stroke-dasharray="6.400 1.600 1.600 1.600"/><rect x="137.40" y="175.40" width="4.4" height="4.4" fill="#3a3436" stroke="#f2b88e" stroke-width="1.25"/><path d="M155 178.500H171" stroke="#e2e4e8" fill="none" stroke-width="1.25" stroke-dasharray="6.800 1.400 1.600 1.400"/><circle cx="192.100" cy="178" r="7.700" stroke="#e2e4e8" fill="none" stroke-width="1.25"/><rect x="190.40" y="176.30" width="3.4" height="3.4" fill="#3a3436" stroke="#f2b88e" stroke-width="1.25"/><circle cx="215.200" cy="178.200" r="5.600" stroke="#e2e4e8" fill="none" stroke-width="1.25"/><rect x="213.40" y="170.50" width="3.6" height="3.6" fill="#3a3436" stroke="#f2b88e" stroke-width="1.25"/><rect x="213.40" y="182.30" width="3.6" height="3.6" fill="#3a3436" stroke="#f2b88e" stroke-width="1.25"/><rect x="207.40" y="176.40" width="3.6" height="3.6" fill="#3a3436" stroke="#f2b88e" stroke-width="1.25"/><rect x="219.40" y="176.40" width="3.6" height="3.6" fill="#3a3436" stroke="#f2b88e" stroke-width="1.25"/><circle cx="239.600" cy="179.400" r="6.200" stroke="#e2e4e8" fill="none" stroke-width="1.25"/><path d="M230.500 178.600L239 170" stroke="#e2e4e8" fill="none" stroke-width="1.25"/><rect x="232.70" y="172.10" width="3.8" height="3.8" fill="#3a3436" stroke="#f2b88e" stroke-width="1.25"/><path d="M259.100 181.500H274M266.500 170.600V181.500" stroke="#e2e4e8" fill="none" stroke-width="1.25"/><rect x="264.60" y="179.60" width="3.8" height="3.8" fill="#3a3436" stroke="#f2b88e" stroke-width="1.25"/><path d="M282 183.200L295.200 170M284.900 186L298 172.900" stroke="#e2e4e8" fill="none" stroke-width="1.25"/><rect x="307.600" y="172.500" width="10.100" height="6.800" stroke="#e2e4e8" fill="none" stroke-width="1.25"/><circle cx="317.700" cy="179.400" r="3.100" stroke="#e2e4e8" fill="none" stroke-width="1.25"/><rect x="305.20" y="177.40" width="4" height="4" fill="#3a3436" stroke="#f2b88e" stroke-width="1.25"/><rect x="334.30" y="176.50" width="4.2" height="4.2" fill="#3a3436" stroke="#f2b88e" stroke-width="1.25"/><path d="M357 183.800L370.800 170" stroke="#e2e4e8" fill="none" stroke-width="1.25"/><rect x="363.40" y="173.50" width="4" height="4" fill="#3a3436" stroke="#f2b88e" stroke-width="1.25"/><rect x="368.60" y="178.30" width="4" height="4" fill="#3a3436" stroke="#e2e4e8" stroke-width="1.25"/><path d="M380 185.800V177.700a5.400 5.400 0 0 1 10.800 0V185.800H387.3V178a1.900 1.900 0 0 0 -3.800 0V185.800z" fill="#cdcfd4"/><path d="M380 183.200h3.500v2.700H380zM387.3 183.200h3.500v2.700h-3.500z" fill="#fff"/><rect x="392.70" y="182.30" width="3.2" height="3.2" fill="#3a3436" stroke="#f0d6c4" stroke-width="1.25"/><path d="M390.200 171.200l4.600 4.600M394.800 171.200l-4.600 4.600" stroke="#f2465c" stroke-width="1.900"/><path d="M409.2 185.800V177.700a5.400 5.400 0 0 1 10.800 0V185.800H416.5V178a1.900 1.900 0 0 0 -3.800 0V185.800z" fill="#cdcfd4"/><path d="M409.2 183.200h3.500v2.700H409.2zM416.5 183.200h3.500v2.700h-3.500z" fill="#fff"/><rect x="421.50" y="182.30" width="3.2" height="3.2" fill="#3a3436" stroke="#f0d6c4" stroke-width="1.25"/></svg>
<div style="left:0px;top:1004px;width:1921px;height:27px;background:#222933;"></div>
<div style="left:0px;top:1003.6px;width:1921px;height:1px;background:#39404b;"></div>
<svg style="left:0px;top:1003px;" width="240" height="22" viewBox="0 1003 240 22"><path d="M9.0 1004.4H70.0C65.0 1006.4 67 1022 61 1022H18C12 1022 14.0 1006.4 9.0 1004.4z" fill="#3b4453"/><path d="M69.0 1004.4H134.0C129.0 1006.4 131 1022 125 1022H78C72 1022 74.0 1006.4 69.0 1004.4z" fill="#2d3440"/><path d="M134.0 1004.4H200.0C195.0 1006.4 197 1022 191 1022H143C137 1022 139.0 1006.4 134.0 1004.4z" fill="#2d3440"/><path d="M202.0 1004.4H227.0C222.0 1006.4 224 1022 218 1022H211C205 1022 207.0 1006.4 202.0 1004.4z" fill="#2d3440"/><path d="M210.600 1013.400h6.400M213.800 1010.200v6.400" stroke="#c9ccd2" stroke-width="1.600"/></svg>
<div class="t" style="left:21.70px;top:1007.04px;font-size:12px;line-height:12px;color:#ffffff;letter-spacing:0.397px;font-weight:700;">Model</div>
<div class="t" style="left:79.02px;top:1007.04px;font-size:12px;line-height:12px;color:#cdd0d5;letter-spacing:0.061px;">Layout1</div>
<div class="t" style="left:144.02px;top:1007.04px;font-size:12px;line-height:12px;color:#cdd0d5;letter-spacing:0.231px;">Layout2</div>
<div style="left:0px;top:1030.5px;width:1921px;height:5.5px;background:#24261f;"></div>
<div style="left:47.5px;top:1033.2px;width:344px;height:3px;background:#24261f;border:1px solid #5d5f58;border-bottom:none;box-sizing:border-box;"></div>
<div style="left:980px;top:1032.6px;width:45px;height:3.4px;background:#55574f;"></div>
<div style="left:683px;top:1005.6px;width:150px;height:24.4px;background:#363e4d;"></div>
<div style="left:836px;top:1005.6px;width:47px;height:24.4px;background:#363e4d;"></div>
<div style="left:887px;top:1005.6px;width:62px;height:24.4px;background:#363e4d;"></div>
<div style="left:952.5px;top:1005.6px;width:113.5px;height:24.4px;background:#363e4d;"></div>
<div style="left:1066.6px;top:1005.6px;width:37.80000000000018px;height:24.4px;background:#363e4d;"></div>
<div style="left:1105px;top:1005.6px;width:62px;height:24.4px;background:#363e4d;"></div>
<div style="left:1168px;top:1005.6px;width:24px;height:24.4px;background:#363e4d;"></div>
<div style="left:1193px;top:1005.6px;width:25px;height:24.4px;background:#363e4d;"></div>
<div style="left:1219px;top:1005.6px;width:24px;height:24.4px;background:#363e4d;"></div>
<div style="left:1244px;top:1005.6px;width:38px;height:24.4px;background:#363e4d;"></div>
<div style="left:1285px;top:1005.6px;width:60px;height:24.4px;background:#363e4d;"></div>
<div style="left:1348px;top:1005.6px;width:38px;height:24.4px;background:#363e4d;"></div>
<div style="left:1390px;top:1005.6px;width:146px;height:24.4px;background:#363e4d;"></div>
<div style="left:1538.5px;top:1005.6px;width:38.0px;height:24.4px;background:#363e4d;"></div>
<div style="left:1578px;top:1005.6px;width:25px;height:24.4px;background:#363e4d;"></div>
<div style="left:1606px;top:1005.6px;width:96.5px;height:24.4px;background:#363e4d;"></div>
<div style="left:1704.5px;top:1005.6px;width:22.5px;height:24.4px;background:#363e4d;"></div>
<div style="left:1730px;top:1005.6px;width:38px;height:24.4px;background:#363e4d;"></div>
<div style="left:1769.5px;top:1005.6px;width:25.5px;height:24.4px;background:#363e4d;"></div>
<div style="left:1797.5px;top:1005.6px;width:23.5px;height:24.4px;background:#363e4d;"></div>
<div style="left:1824.5px;top:1005.6px;width:41.0px;height:24.4px;background:#363e4d;"></div>
<div style="left:1868.5px;top:1005.6px;width:24.5px;height:24.4px;background:#363e4d;"></div>
<div style="left:1894px;top:1005.6px;width:23px;height:24.4px;background:#363e4d;"></div>
<div style="left:887.4px;top:1006.2px;width:21.600000000000023px;height:23.0px;background:#5a8fd2;"></div>
<div style="left:1002.8px;top:1006.2px;width:22.200000000000045px;height:23.0px;background:#5a8fd2;"></div>
<div style="left:1130.4px;top:1006.2px;width:21.59999999999991px;height:23.0px;background:#5a8fd2;"></div>
<div style="left:1286px;top:1006.2px;width:22.40000000000009px;height:23.0px;background:#5a8fd2;"></div>
<div style="left:1350px;top:1006.2px;width:21.59999999999991px;height:23.0px;background:#5a8fd2;"></div>
<div style="left:1391px;top:1006.2px;width:22.40000000000009px;height:23.0px;background:#5a8fd2;"></div>
<div style="left:1798.6px;top:1006.2px;width:22.0px;height:23.0px;background:#5a8fd2;"></div>
<div style="left:976.5px;top:1005.6px;width:1px;height:24.4px;background:#2a313d;"></div>
<div style="left:1001.8px;top:1005.6px;width:1px;height:24.4px;background:#2a313d;"></div>
<div style="left:1129.6px;top:1005.6px;width:1px;height:24.4px;background:#2a313d;"></div>
<div class="t" style="left:694.89px;top:1012.24px;font-size:12px;line-height:12px;color:#e6e6e6;letter-spacing:-0.001px;">61.6222, -4.9713, 0.0000</div>
<div class="t" style="left:839.02px;top:1012.24px;font-size:12px;line-height:12px;color:#e6e6e6;letter-spacing:-0.323px;">MODEL</div>
<div class="t" style="left:1466.69px;top:1012.24px;font-size:12px;line-height:12px;color:#e6e6e6;letter-spacing:-0.270px;">1:1 / 100%</div>
<div class="t" style="left:1634.02px;top:1012.24px;font-size:12px;line-height:12px;color:#e6e6e6;letter-spacing:0.341px;">Decimal</div>
<svg style="left:880px;top:1004.5px;" width="1041" height="27" viewBox="880 1004 1041 27"><path d="M893.600 1010.400v14.400M898.200 1010.400v14.400M902.800 1010.400v14.400M890.800 1013.200h14.800M890.800 1017.600h14.800M890.800 1022h14.800" stroke="#fff" stroke-width="1.100"/><rect x="916.0" y="1011.6" width="1.800" height="1.800" fill="#e6e6e6"/><rect x="916.0" y="1017.0" width="1.800" height="1.800" fill="#e6e6e6"/><rect x="916.0" y="1022.4" width="1.800" height="1.800" fill="#e6e6e6"/><rect x="921.6" y="1011.6" width="1.800" height="1.800" fill="#e6e6e6"/><rect x="921.6" y="1017.0" width="1.800" height="1.800" fill="#e6e6e6"/><rect x="921.6" y="1022.4" width="1.800" height="1.800" fill="#e6e6e6"/><rect x="927.2" y="1011.6" width="1.800" height="1.800" fill="#e6e6e6"/><rect x="927.2" y="1017.0" width="1.800" height="1.800" fill="#e6e6e6"/><rect x="927.2" y="1022.4" width="1.800" height="1.800" fill="#e6e6e6"/><path d="M939 1016.2h6l-3 3.600z" fill="#d4d6da"/><path d="M957 1025v-5h6.400v-9h7v5" stroke="#e8e8e8" fill="none" stroke-width="1.300"/><rect x="956.400" y="1020.600" width="6.400" height="5" fill="#e6e6e6"/><rect x="964" y="1011" width="6.400" height="4.400" stroke="#e8e8e8" fill="none" stroke-width="1.300"/><path d="M981.400 1014.400h7M984.900 1011v7" stroke="#e8e8e8" fill="none" stroke-width="1.300"/><rect x="987.600" y="1019" width="9.600" height="4.200" fill="#e6e6e6"/><path d="M1006.600 1010v14.600h15" stroke="#fff" stroke-width="1.500" fill="none"/><path d="M1006.600 1019.600h5v5" stroke="#fff" stroke-width="1" fill="none"/><circle cx="1038" cy="1018.600" r="6.400" stroke="#e8e8e8" fill="none" stroke-width="1.300"/><path d="M1038 1018.600h9.600M1038 1018.600l7-7.600" stroke="#e8e8e8" fill="none" stroke-width="1.300"/><path d="M1054.6 1016.2h6l-3 3.600z" fill="#d4d6da"/><path d="M1073 1010.600l11.600 14" stroke="#f0465a" stroke-width="1.200"/><path d="M1078.800 1009v17" stroke="#58c878" stroke-width="1.200"/><path d="M1084.600 1010.600l-11.600 14" stroke="#f0465a" stroke-width="0"/><rect x="1077.400" y="1016" width="2.800" height="2.800" fill="#e6e6e6"/><path d="M1071.400 1012.400l3.400 2.800" stroke="#e6e6e6" stroke-width="1"/><path d="M1093 1016.2h6l-3 3.600z" fill="#d4d6da"/><path d="M1109 1024.400h15.600M1109 1024.400l14.600-11.600" stroke="#e8e8e8" fill="none" stroke-width="1.300"/><rect x="1116" y="1016.600" width="3.400" height="3.400" fill="#e6e6e6"/><rect x="1136" y="1013" width="12" height="11" stroke="#fff" fill="none" stroke-width="1.500"/><rect x="1133.600" y="1010.400" width="4.400" height="4.400" fill="#5a8fd2" stroke="#fff" stroke-width="1.100"/><path d="M1157 1016.2h6l-3 3.600z" fill="#d4d6da"/><path d="M1173.400 1012h15.600M1173.400 1015.400h10" stroke="#e6e6e6" stroke-width="1.300"/><path d="M1173.400 1019.400h15.600" stroke="#e6e6e6" stroke-width="2.200"/><path d="M1173.400 1023.400h9" stroke="#e6e6e6" stroke-width="2.800"/><rect x="1198.400" y="1010.400" width="15.600" height="15.600" stroke="#e8e8e8" fill="none" stroke-width="1.300"/><rect x="1199.6" y="1011.6" width="3.300" height="3.300" fill="#e6e6e6"/><rect x="1199.6" y="1018.2" width="3.300" height="3.300" fill="#e6e6e6"/><rect x="1202.9" y="1014.9" width="3.300" height="3.300" fill="#e6e6e6"/><rect x="1202.9" y="1021.5" width="3.300" height="3.300" fill="#e6e6e6"/><rect x="1206.2" y="1011.6" width="3.300" height="3.300" fill="#e6e6e6"/><rect x="1206.2" y="1018.2" width="3.300" height="3.300" fill="#e6e6e6"/><rect x="1209.5" y="1014.9" width="3.300" height="3.300" fill="#e6e6e6"/><rect x="1209.5" y="1021.5" width="3.300" height="3.300" fill="#e6e6e6"/><path d="M1224 1012.400h5M1226.500 1010v5" stroke="#e8e8e8" fill="none" stroke-width="1.300" stroke-width="1.100"/><rect x="1227.600" y="1014.400" width="9" height="9" fill="none" stroke="#3f8f58" stroke-width="1"/><rect x="1230" y="1016.800" width="9.600" height="9.400" fill="#6fd088"/><path d="M1252 1016.400h9.600v9h-9.600zM1252 1016.400l4.400-5h9.600l-4.400 5M1266 1011.400v9l-4.400 5" stroke="#e8e8e8" fill="none" stroke-width="1.300" stroke-width="1.200"/><rect x="1249" y="1022.600" width="4" height="4" fill="#363e4d" stroke="#f0b48c" stroke-width="1.100"/><path d="M1272.4 1016.2h6l-3 3.600z" fill="#d4d6da"/><path d="M1291.400 1012v12h13" stroke="#fff" stroke-width="1.500" fill="none"/><path d="M1291.400 1009.400l2.800 3.600h-5.600zM1306.400 1024l-3.600 2.800v-5.600z" fill="#fff"/><path d="M1300 1010.400l-2.600 4.400h2l-1.400 3.600 4-5h-2.200l1.800-3z" fill="#fff"/><path d="M1316 1016h10.400v9.600h-10.400zM1316 1016l4-4.600h10.400l-4 4.600M1330.400 1011.400v9.600l-4 4.600" stroke="#d8dade" fill="none" stroke-width="1.100" stroke-dasharray="3.400 1.400"/><rect x="1314.600" y="1014.600" width="2.800" height="2.800" fill="#7fc0f0"/><rect x="1325" y="1014.600" width="2.800" height="2.800" fill="#7fc0f0"/><rect x="1314.600" y="1024.200" width="2.800" height="2.800" fill="#7fc0f0"/><rect x="1325" y="1024.200" width="2.800" height="2.800" fill="#7fc0f0"/><path d="M1338 1016.2h6l-3 3.600z" fill="#d4d6da"/><path d="M1360.800 1010.400l-7.400 12.600h14.800zM1360.800 1010.400v8M1360.800 1018.400l-7.400 4.600M1360.800 1018.400l7.400 4.600" stroke="#fff" fill="none" stroke-width="1.200"/><circle cx="1360.800" cy="1010.600" r="1.500" fill="#fff"/><circle cx="1353.600" cy="1023" r="1.500" fill="#fff"/><circle cx="1368" cy="1023" r="1.500" fill="#fff"/><circle cx="1360.800" cy="1018.400" r="1.300" fill="#fff"/><path d="M1377 1016.2h6l-3 3.600z" fill="#d4d6da"/><path d="M1400 1009.400l2.300 8.600 4.600 7.800-6.900-3.800-6.900 3.800 4.600-7.800z" fill="#fff"/><circle cx="1408.400" cy="1012.600" r="2.300" stroke="#fff" fill="none" stroke-width="1.200"/><path d="M1425.6 1009.400l2.300 8.600 4.600 7.800-6.900-3.800-6.900 3.800 4.600-7.800z" fill="#d2d4d8"/><path d="M1433 1009l-2.400 3.800h1.800l-1.200 3 3.600-4.400h-2l1.600-2.400z" fill="#d2d4d8"/><path d="M1451.4 1009.400l2.300 8.600 4.600 7.800-6.900-3.800-6.900 3.800 4.600-7.800z" fill="#d2d4d8"/><path d="M1525.6 1016.2h6l-3 3.600z" fill="#d4d6da"/><path d="M1554.6 1017.6L1558.0 1017.6" stroke="#e2e2e2" stroke-width="3"/><path d="M1553.3 1020.9L1555.7 1023.3" stroke="#e2e2e2" stroke-width="3"/><path d="M1550.0 1022.2L1550.0 1025.6" stroke="#e2e2e2" stroke-width="3"/><path d="M1546.7 1020.9L1544.3 1023.3" stroke="#e2e2e2" stroke-width="3"/><path d="M1545.4 1017.6L1542.0 1017.6" stroke="#e2e2e2" stroke-width="3"/><path d="M1546.7 1014.3L1544.3 1011.9" stroke="#e2e2e2" stroke-width="3"/><path d="M1550.0 1013.0L1550.0 1009.6" stroke="#e2e2e2" stroke-width="3"/><path d="M1553.3 1014.3L1555.7 1011.9" stroke="#e2e2e2" stroke-width="3"/><circle cx="1550" cy="1017.600" r="4.600" fill="none" stroke="#e2e2e2" stroke-width="3"/><path d="M1567 1016.2h6l-3 3.600z" fill="#d4d6da"/><path d="M1582.600 1018h16.600M1590.900 1009.600v16.800" stroke="#f0f0f0" stroke-width="2"/><rect x="1613.600" y="1010" width="8" height="15.600" fill="#e2e2e2"/><path d="M1617.600 1012.400h4M1619 1015h2.600M1617.600 1017.600h4M1619 1020.200h2.600M1617.600 1022.800h4" stroke="#363e4d" stroke-width="1"/><path d="M1692 1016.2h6l-3 3.600z" fill="#d4d6da"/><rect x="1710" y="1010.400" width="11.600" height="15" rx="1" stroke="#e8e8e8" fill="none" stroke-width="1.300"/><path d="M1710 1013.400h11.600" stroke="#e8e8e8" fill="none" stroke-width="1.300"/><path d="M1712.200 1016.600h1.400M1715 1016.600h5M1712.200 1019.600h1.400M1715 1019.600h5M1712.200 1022.600h1.400M1715 1022.600h5" stroke="#e6e6e6" stroke-width="1.100"/><path d="M1742 1022.400h-6.400v-11.400h13.600v4" stroke="#e8e8e8" fill="none" stroke-width="1.300"/><path d="M1735.600 1012h13.600" stroke="#e6e6e6" stroke-width="2"/><rect x="1742.600" y="1020.200" width="7" height="5.400" fill="#e6e6e6"/><path d="M1744.400 1020.200v-1.600a2 2 0 0 1 4 0" stroke="#e8e8e8" fill="none" stroke-width="1.300" stroke-width="1.100"/><path d="M1758.6 1016.2h6l-3 3.600z" fill="#d4d6da"/><rect x="1775.400" y="1010.600" width="5.600" height="5.600" stroke="#e8e8e8" fill="none" stroke-width="1.300" stroke-width="1.100"/><circle cx="1787.400" cy="1016" r="3" stroke="#e8e8e8" fill="none" stroke-width="1.300" stroke-width="1.100"/><path d="M1781.400 1019.400l3.400 6h-6.800z" stroke="#e8e8e8" fill="none" stroke-width="1.300" stroke-width="1.100"/><circle cx="1809.600" cy="1017.600" r="7.600" fill="#8fb6e4" stroke="#fff" stroke-width="1.400"/><path d="M1805.400 1021.800l8.400-8.400" stroke="#fff" stroke-width="2.200"/><rect x="1829" y="1011" width="12.400" height="10.600" fill="#c9c3bb"/><rect x="1831.400" y="1014" width="5.600" height="5.600" fill="#8a8e96" stroke="#666" stroke-width=".6"/><rect x="1838" y="1019" width="6.400" height="5.600" fill="#f3bf48"/><path d="M1839.400 1019v-1.400a1.800 1.800 0 0 1 3.600 0v1.400" stroke="#f3bf48" stroke-width="1.200" fill="none"/><path d="M1850.400 1009.400v11M1846 1013.600h9" stroke="#7fc0f0" stroke-width="1.100"/><circle cx="1850.400" cy="1013.600" r="2.200" fill="#363e4d" stroke="#e6e6e6" stroke-width="1"/><path d="M1853 1009.600h6l3 3v8h-6" fill="none" stroke="#5a9fe0" stroke-width="1"/><rect x="1847" y="1019.600" width="6.400" height="5" fill="#f3bf48"/><path d="M1853.600 1021.400l2.600 2.800 5-5.400" stroke="#3fae5c" stroke-width="2" fill="none"/><rect x="1873.400" y="1011.400" width="15" height="11.600" stroke="#e8e8e8" fill="none" stroke-width="1.300" stroke-width="1.100"/><path d="M1876.400 1020.200l3-3M1885.400 1014.200l-3 3" stroke="#e8e8e8" fill="none" stroke-width="1.300" stroke-width="1.100"/><path d="M1875.400 1021.200v-3.200l3.200 3.200zM1886.400 1013.200v3.200l-3.200-3.200z" fill="#e6e6e6"/><path d="M1896.600 1011.800h16M1896.600 1017.600h16M1896.600 1023.400h16" stroke="#e6e6e6" stroke-width="1.900"/></svg>
<div style="left:1919px;top:0px;width:2px;height:1036px;background:#15181e;"></div>
</body></html>
